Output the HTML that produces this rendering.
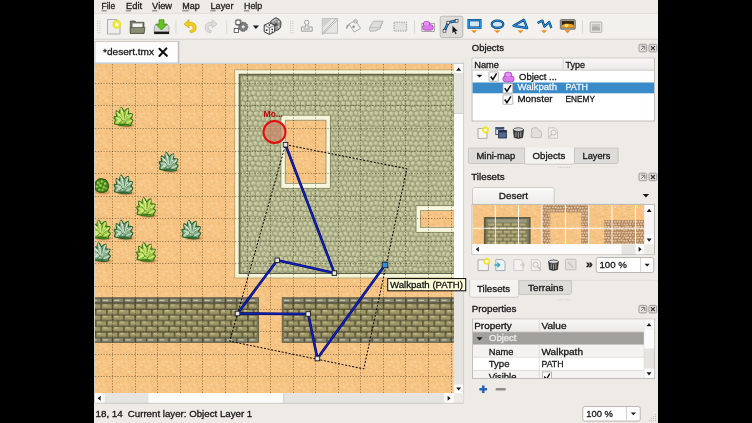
<!DOCTYPE html>
<html><head><meta charset="utf-8"><style>
body{margin:0;width:752px;height:423px;overflow:hidden;background:#000;position:relative;font-family:"Liberation Sans",sans-serif}
</style></head><body>
<div style="position:absolute;left:94px;top:0;width:564px;height:423px;background:#eeebe7"></div>
<svg width="752" height="423" viewBox="0 0 752 423" style="position:absolute;left:0;top:0;will-change:transform" font-family="Liberation Sans, sans-serif"><defs><linearGradient id="hdr" x1="0" y1="0" x2="0" y2="1"><stop offset="0" stop-color="#f8f7f5"/><stop offset="1" stop-color="#ebe9e6"/></linearGradient><linearGradient id="btn" x1="0" y1="0" x2="0" y2="1"><stop offset="0" stop-color="#fbfaf9"/><stop offset="1" stop-color="#ecebe8"/></linearGradient></defs><text x="101.5" y="9" font-size="9.2" fill="#202020" stroke="#202020" stroke-width="0.3" textLength="13.75" lengthAdjust="spacingAndGlyphs">File</text><rect x="101.5" y="10.4" width="5.2" height="0.9" fill="#606060"/><text x="125.9" y="9" font-size="9.2" fill="#202020" stroke="#202020" stroke-width="0.3" textLength="16.2" lengthAdjust="spacingAndGlyphs">Edit</text><rect x="125.9" y="10.4" width="5.2" height="0.9" fill="#606060"/><text x="152.1" y="9" font-size="9.2" fill="#202020" stroke="#202020" stroke-width="0.3" textLength="20" lengthAdjust="spacingAndGlyphs">View</text><rect x="152.1" y="10.4" width="5.2" height="0.9" fill="#606060"/><text x="182.25" y="9" font-size="9.2" fill="#202020" stroke="#202020" stroke-width="0.3" textLength="17.5" lengthAdjust="spacingAndGlyphs">Map</text><rect x="182.25" y="10.4" width="6.5" height="0.9" fill="#606060"/><text x="210.4" y="9" font-size="9.2" fill="#202020" stroke="#202020" stroke-width="0.3" textLength="23.1" lengthAdjust="spacingAndGlyphs">Layer</text><rect x="210.4" y="10.4" width="5.2" height="0.9" fill="#606060"/><text x="244" y="9" font-size="9.2" fill="#202020" stroke="#202020" stroke-width="0.3" textLength="18.25" lengthAdjust="spacingAndGlyphs">Help</text><rect x="244" y="10.4" width="5.2" height="0.9" fill="#606060"/><rect x="94" y="13" width="564" height="26" fill="#f3f1ee"/><line x1="94" y1="13.5" x2="658" y2="13.5" stroke="#e2e0dc" stroke-width="1"/><line x1="94" y1="39.2" x2="658" y2="39.2" stroke="#d4d2ce" stroke-width="1"/><rect x="95" y="41.6" width="84" height="21.4" fill="#fdfdfd" stroke="#c9c7c3" stroke-width="0.9"/><line x1="178.3" y1="42" x2="178.3" y2="63" stroke="#b9b7b3" stroke-width="1"/><text x="103" y="55.4" font-size="9.8" fill="#1a1a1a" stroke="#1a1a1a" stroke-width="0.3" textLength="51" lengthAdjust="spacingAndGlyphs">*desert.tmx</text><path d="M159.4 48.8 L166.8 55.8 M166.4 48.4 L159.4 56" stroke="#111" stroke-width="2.1" stroke-linecap="round"/><line x1="94" y1="63.3" x2="464" y2="63.3" stroke="#c4cad0" stroke-width="1"/><rect x="453.8" y="64" width="9.6" height="329.1" fill="#e6e4e0"/><rect x="453.8" y="64" width="9.6" height="9" fill="#fdfdfd"/><path d="M456.1 70.8L461.1 70.8L458.6 67.6Z" fill="#1a1a1a"/><rect x="453.8" y="113.4" width="9.6" height="176.6" fill="#fcfcfc"/><line x1="453.8" y1="113.4" x2="463.4" y2="113.4" stroke="#c8c6c2" stroke-width="0.8"/><rect x="453.8" y="384.5" width="9.6" height="8.6" fill="#fdfdfd"/><path d="M456.1 387.4L461.1 387.4L458.6 390.6Z" fill="#1a1a1a"/><line x1="463.6" y1="62.5" x2="463.6" y2="403.2" stroke="#c8c6c2" stroke-width="0.8"/><rect x="95" y="393.1" width="358.8" height="10" fill="#e6e4e0"/><rect x="95" y="393.1" width="9.6" height="10" fill="#fdfdfd"/><path d="M97.6 398.3L100.6 395.8L100.6 400.8Z" fill="#1a1a1a"/><rect x="148.4" y="393.1" width="135.35" height="10" fill="#fcfcfc"/><line x1="283.75" y1="393.1" x2="283.75" y2="403.1" stroke="#c8c6c2" stroke-width="0.8"/><rect x="444.2" y="393.1" width="9.6" height="10" fill="#fdfdfd"/><path d="M450.6 398.3L447.6 395.8L447.6 400.8Z" fill="#1a1a1a"/><rect x="453.8" y="393.1" width="9.6" height="10" fill="#eeebe7"/><line x1="95" y1="403.3" x2="463.6" y2="403.3" stroke="#c4c2be" stroke-width="0.8"/><line x1="94.5" y1="62.5" x2="94.5" y2="403.2" stroke="#c8c6c2" stroke-width="0.8"/><text x="95.5" y="416.9" font-size="9.8" fill="#161616" stroke="#161616" stroke-width="0.3" textLength="27.25" lengthAdjust="spacingAndGlyphs">18, 14</text><text x="127.75" y="416.9" font-size="9.8" fill="#161616" stroke="#161616" stroke-width="0.3" textLength="124.5" lengthAdjust="spacingAndGlyphs">Current layer: Object Layer 1</text><rect x="582.75" y="406.5" width="57.5" height="14.6" fill="#fefefe" stroke="#b2b0ac" stroke-width="0.9" rx="2"/><line x1="626.5" y1="407" x2="626.5" y2="420.6" stroke="#d0cecb" stroke-width="0.9"/><path d="M630.77 412.6L635.98 412.6L633.38 415.2Z" fill="#1a1a1a"/><text x="586.25" y="416.75" font-size="9.8" fill="#161616" stroke="#161616" stroke-width="0.3" textLength="26.75" lengthAdjust="spacingAndGlyphs">100 %</text><rect x="655" y="414" width="1" height="1" fill="#c0beb9"/><rect x="653" y="416" width="1" height="1" fill="#c0beb9"/><rect x="655" y="416" width="1" height="1" fill="#c0beb9"/><rect x="651" y="418" width="1" height="1" fill="#c0beb9"/><rect x="653" y="418" width="1" height="1" fill="#c0beb9"/><rect x="655" y="418" width="1" height="1" fill="#c0beb9"/><rect x="649" y="420" width="1" height="1" fill="#c0beb9"/><rect x="651" y="420" width="1" height="1" fill="#c0beb9"/><rect x="653" y="420" width="1" height="1" fill="#c0beb9"/><rect x="655" y="420" width="1" height="1" fill="#c0beb9"/><text x="471.75" y="51" font-size="9.6" fill="#161616" stroke="#161616" stroke-width="0.3" textLength="32.25" lengthAdjust="spacingAndGlyphs">Objects</text><rect x="639" y="44.3" width="7.75" height="7.5" fill="#e4e2de" stroke="#8a8884" stroke-width="0.8" rx="1.2"/><path d="M641.3 46.3 h3.5 v3.5 M641.3 49.8 l2.5 -2.5" stroke="#555" stroke-width="0.8" fill="none"/><rect x="649" y="44.3" width="7.75" height="7.5" fill="#e4e2de" stroke="#8a8884" stroke-width="0.8" rx="1.2"/><path d="M650.9 46.1 L654.9 50.1 M654.9 46.1 L650.9 50.1" stroke="#333" stroke-width="1.1"/><rect x="472.1" y="58.1" width="182.4" height="62.9" fill="#ffffff" stroke="#bcbab6" stroke-width="0.9"/><rect x="472.6" y="58.6" width="181.4" height="11.6" fill="url(#hdr)"/><line x1="472.6" y1="70.2" x2="654" y2="70.2" stroke="#c9c7c3" stroke-width="0.9"/><line x1="563.1" y1="59" x2="563.1" y2="70" stroke="#d4d2ce" stroke-width="0.9"/><text x="474.25" y="67.75" font-size="9.6" fill="#161616" stroke="#161616" stroke-width="0.3" textLength="24.75" lengthAdjust="spacingAndGlyphs">Name</text><text x="565.6" y="67.5" font-size="9.6" fill="#161616" stroke="#161616" stroke-width="0.3" textLength="19.4" lengthAdjust="spacingAndGlyphs">Type</text><path d="M476.5 74.8L482.5 74.8L479.5 77.6Z" fill="#1a1a1a"/><rect x="489" y="71.9" width="9.4" height="9.35" fill="#fdfdfd" stroke="#a8a6a2" stroke-width="0.8" rx="0.6"/><path d="M490.8 76.5 L492.9 79.65 L496.6 73.4" stroke="#0a0a0a" stroke-width="1.5" fill="none"/><rect x="504.6" y="72.2" width="7.2" height="5.6" rx="2.6" fill="#dc78ee" stroke="#9a3ab4" stroke-width="0.8"/><rect x="503" y="76.2" width="11" height="5.6" rx="2.4" fill="#dc78ee" stroke="#9a3ab4" stroke-width="0.8"/><rect x="505.4" y="73" width="5.6" height="3.8" rx="1.8" fill="#e896f4"/><text x="519" y="79.75" font-size="9.6" fill="#161616" stroke="#161616" stroke-width="0.3" textLength="38" lengthAdjust="spacingAndGlyphs">Object ...</text><rect x="472.6" y="82.5" width="181.4" height="10.8" fill="#3a8ac8"/><rect x="503" y="83.6" width="9.75" height="9.4" fill="#fdfdfd" stroke="#a8a6a2" stroke-width="0.8" rx="0.6"/><path d="M504.8 88.2 L506.9 91.4 L510.95 85.1" stroke="#0a0a0a" stroke-width="1.5" fill="none"/><text x="517.5" y="90.4" font-size="9.6" fill="#eef4fa" stroke="#eef4fa" stroke-width="0.3" textLength="39.5" lengthAdjust="spacingAndGlyphs">Walkpath</text><text x="565.6" y="90.4" font-size="9.6" fill="#eef4fa" stroke="#eef4fa" stroke-width="0.3" textLength="22.4" lengthAdjust="spacingAndGlyphs">PATH</text><rect x="503" y="94.9" width="9.75" height="9.4" fill="#fdfdfd" stroke="#a8a6a2" stroke-width="0.8" rx="0.6"/><path d="M504.8 99.5 L506.9 102.7 L510.95 96.4" stroke="#0a0a0a" stroke-width="1.5" fill="none"/><text x="517.5" y="102" font-size="9.6" fill="#161616" stroke="#161616" stroke-width="0.3" textLength="35" lengthAdjust="spacingAndGlyphs">Monster</text><text x="565.6" y="102" font-size="9.6" fill="#161616" stroke="#161616" stroke-width="0.3" textLength="29.4" lengthAdjust="spacingAndGlyphs">ENEMY</text><path d="M478 128.5 H484.5 L487 131 V138.4 H478 Z" fill="#f4f4f2" stroke="#9a9a98" stroke-width="0.8"/><circle cx="485.5" cy="130" r="3.4" fill="#f2e21a" opacity="0.9"/><circle cx="485.5" cy="130" r="1.6" fill="#fffbe0"/><rect x="495.8" y="127.4" width="8" height="7.2" fill="#e4e8f0" stroke="#2a3454" stroke-width="0.8"/><rect x="496.2" y="127.8" width="7.2" height="1.8" fill="#34466e"/><rect x="498.6" y="130.4" width="7.8" height="7.6" fill="#54688e" stroke="#1c2440" stroke-width="0.8"/><rect x="499" y="130.8" width="7" height="1.6" fill="#24304e"/><path d="M513.3 129.5 Q518.4 126.6 523.6 129.5 L522.6 137.6 Q518.4 139.2 514.3 137.6 Z" fill="#3a3a3a" stroke="#111" stroke-width="0.6"/><ellipse cx="518.45" cy="129.6" rx="5" ry="1.8" fill="#d8d8d8" stroke="#222" stroke-width="0.6"/><path d="M516 132 V137 M518.4 132.3 V137.6 M520.8 132 V137" stroke="#bdbdbd" stroke-width="0.8"/><path d="M531.5 129 Q534 126.8 537 128 Q539 129 538.6 130.6 L540.8 131.2 Q542.2 132.4 541.6 135 L541 137.4 Q536 138.4 531.2 137.2 Q530.4 134.6 532 133.4 Q531 131 531.5 129Z" fill="#e2e0dc" stroke="#b4b2ae" stroke-width="0.8"/><path d="M548.5 127.8 H555 L557.5 130.3 V138.2 H548.5 Z" fill="#efeeec" stroke="#c0bebb" stroke-width="0.8"/><circle cx="553.5" cy="132.5" r="2.6" fill="none" stroke="#b8b6b2" stroke-width="0.9"/><path d="M551.7 134.4 L549.4 137" stroke="#b8b6b2" stroke-width="1.1"/><path d="M468.4 148.1 H524.6 V163.5 H470.4 Q468.4 163.5 468.4 161.5 Z" fill="#dedcd8" stroke="#c2c0bc" stroke-width="0.8"/><path d="M574.4 148.1 H618.2 V161.5 Q618.2 163.5 616.2 163.5 H574.4 Z" fill="#dedcd8" stroke="#c2c0bc" stroke-width="0.8"/><path d="M524.6 147.6 V162.4 Q524.6 164.2 526.4 164.2 H572.6 Q574.4 164.2 574.4 162.4 V147.6" fill="#f5f3ef" stroke="#c2c0bc" stroke-width="0.8"/><text x="476.5" y="158.75" font-size="9.6" fill="#161616" stroke="#161616" stroke-width="0.3" textLength="38.75" lengthAdjust="spacingAndGlyphs">Mini-map</text><text x="532.5" y="159.4" font-size="9.6" fill="#161616" stroke="#161616" stroke-width="0.3" textLength="32.75" lengthAdjust="spacingAndGlyphs">Objects</text><text x="582.5" y="158.75" font-size="9.6" fill="#161616" stroke="#161616" stroke-width="0.3" textLength="27.75" lengthAdjust="spacingAndGlyphs">Layers</text><rect x="558" y="167" width="0.8" height="0.8" fill="#b8b6b2"/><rect x="560.2" y="167" width="0.8" height="0.8" fill="#b8b6b2"/><rect x="562.4" y="167" width="0.8" height="0.8" fill="#b8b6b2"/><rect x="564.6" y="167" width="0.8" height="0.8" fill="#b8b6b2"/><rect x="566.8" y="167" width="0.8" height="0.8" fill="#b8b6b2"/><rect x="569" y="167" width="0.8" height="0.8" fill="#b8b6b2"/><text x="471.25" y="179.75" font-size="9.6" fill="#161616" stroke="#161616" stroke-width="0.3" textLength="33.35" lengthAdjust="spacingAndGlyphs">Tilesets</text><rect x="639" y="173.2" width="7.75" height="7.5" fill="#e4e2de" stroke="#8a8884" stroke-width="0.8" rx="1.2"/><path d="M641.3 175.2 h3.5 v3.5 M641.3 178.7 l2.5 -2.5" stroke="#555" stroke-width="0.8" fill="none"/><rect x="649" y="173.2" width="7.75" height="7.5" fill="#e4e2de" stroke="#8a8884" stroke-width="0.8" rx="1.2"/><path d="M650.9 175 L654.9 179 M654.9 175 L650.9 179" stroke="#333" stroke-width="1.1"/><path d="M472.5 204.5 V189.5 Q472.5 187.5 474.5 187.5 H552.25 Q554.25 187.5 554.25 189.5 V204.5" fill="url(#btn)" stroke="#c4c2be" stroke-width="0.8"/><text x="498.75" y="198.75" font-size="9.6" fill="#161616" stroke="#161616" stroke-width="0.3" textLength="29.25" lengthAdjust="spacingAndGlyphs">Desert</text><path d="M642.6 193.9L649.2 193.9L645.9 197.4Z" fill="#1a1a1a"/><line x1="554.25" y1="204.2" x2="644" y2="204.2" stroke="#d0ceca" stroke-width="0.8"/><clipPath id="tc"><rect x="472.5" y="205" width="171.8" height="39.2"/></clipPath><rect x="472" y="204.5" width="182.5" height="50.1" fill="#ffffff" stroke="#b8b6b2" stroke-width="0.9"/><g clip-path="url(#tc)"><rect x="472.5" y="205" width="171.8" height="39.2" fill="url(#sand)"/><rect x="483.9" y="217" width="46.7" height="33" fill="#5e5c44"/><rect x="485.6" y="218.6" width="43.3" height="31.4" fill="#7c7a60"/><rect x="487.4" y="222.6" width="39.7" height="27.4" fill="url(#brick2)"/><rect x="487.4" y="219.4" width="39.7" height="3" fill="#9a9880"/><rect x="542" y="205" width="8.3" height="39.2" fill="url(#cobble)"/><rect x="542" y="205" width="46.2" height="7.6" fill="url(#cobble)"/><rect x="581.2" y="205" width="7" height="39.2" fill="url(#cobble)"/><rect x="604" y="220" width="40.3" height="24.2" fill="url(#cobble)"/><line x1="495.3" y1="205" x2="495.3" y2="244.2" stroke="#ffffff" stroke-width="0.9"/><line x1="518.5" y1="205" x2="518.5" y2="244.2" stroke="#ffffff" stroke-width="0.9"/><line x1="542" y1="205" x2="542" y2="244.2" stroke="#ffffff" stroke-width="0.9"/><line x1="565.5" y1="205" x2="565.5" y2="244.2" stroke="#ffffff" stroke-width="0.9"/><line x1="588.7" y1="205" x2="588.7" y2="244.2" stroke="#ffffff" stroke-width="0.9"/><line x1="612" y1="205" x2="612" y2="244.2" stroke="#ffffff" stroke-width="0.9"/><line x1="635.5" y1="205" x2="635.5" y2="244.2" stroke="#ffffff" stroke-width="0.9"/><line x1="472.5" y1="228.3" x2="644.3" y2="228.3" stroke="#ffffff" stroke-width="0.9"/></g><rect x="644.3" y="205" width="9.7" height="39.2" fill="#f6f5f3"/><rect x="644.3" y="205" width="9.7" height="10.4" fill="#fdfdfd"/><path d="M646.65 211.9L651.65 211.9L649.15 208.7Z" fill="#1a1a1a"/><rect x="644.3" y="235.4" width="9.7" height="8.8" fill="#fdfdfd"/><path d="M646.65 238.6L651.65 238.6L649.15 241.8Z" fill="#1a1a1a"/><line x1="644.3" y1="205" x2="644.3" y2="244.2" stroke="#dcdad6" stroke-width="0.6"/><rect x="472.5" y="244.2" width="171.8" height="10" fill="#e6e4e0"/><rect x="472.5" y="244.2" width="10.5" height="10" fill="#fdfdfd"/><path d="M475.8 249.2L478.8 246.7L478.8 251.7Z" fill="#1a1a1a"/><rect x="483" y="244.2" width="138.6" height="10" fill="#fcfcfc"/><rect x="635.5" y="244.2" width="8.8" height="10" fill="#fdfdfd"/><path d="M641.6 249.2L638.6 246.7L638.6 251.7Z" fill="#1a1a1a"/><rect x="644.3" y="244.2" width="9.7" height="10" fill="#eeebe7"/><path d="M478 259.8 H485.9 L488.4 262.3 V270.6 H478 Z" fill="#f4f4f2" stroke="#9a9a98" stroke-width="0.8"/><circle cx="486.9" cy="261.3" r="3.4" fill="#f2e21a" opacity="0.9"/><circle cx="486.9" cy="261.3" r="1.6" fill="#fffbe0"/><path d="M495.8 259.6 H502.5 L505 262.1 V270.6 H495.8 Z" fill="#eef3f4" stroke="#8aa0a8" stroke-width="0.8"/><path d="M494.5 265 H499.5 M497.3 262.8 L499.6 265 L497.3 267.2" stroke="#3aa8b8" stroke-width="1.4" fill="none"/><path d="M513.8 259.6 H520.5 L523 262.1 V270.6 H513.8 Z" fill="#f2f1ef" stroke="#c6c4c0" stroke-width="0.8"/><path d="M520 265 H524 M522.4 263.2 L524.2 265 L522.4 266.8" stroke="#c8c6c2" stroke-width="1.2" fill="none"/><path d="M531.3 259.6 H538 L540.5 262.1 V270.6 H531.3 Z" fill="#f2f1ef" stroke="#c6c4c0" stroke-width="0.8"/><circle cx="535.6" cy="264.6" r="2.6" fill="none" stroke="#bab8b4" stroke-width="0.9"/><path d="M537.6 266.6 L541 270" stroke="#bab8b4" stroke-width="1.2"/><path d="M548.6 261.6 Q553.5 258.8 558.4 261.6 L557.5 269.6 Q553.5 271.2 549.5 269.6 Z" fill="#3a3a3a" stroke="#111" stroke-width="0.6"/><ellipse cx="553.5" cy="261.7" rx="4.8" ry="1.8" fill="#d8d8d8" stroke="#222" stroke-width="0.6"/><path d="M551.2 264 V269 M553.5 264.3 V269.6 M555.8 264 V269" stroke="#bdbdbd" stroke-width="0.8"/><rect x="565.4" y="259.2" width="10.6" height="10.6" fill="#e2e0dc" stroke="#b8b6b2" stroke-width="0.8" rx="1"/><path d="M567.5 262 L573.5 267.5" stroke="#c8c6c2" stroke-width="1.5"/><text x="586" y="267.6" font-size="10" fill="#161616" stroke="#161616" stroke-width="0.3" font-weight="bold" textLength="6.8" lengthAdjust="spacingAndGlyphs">»</text><rect x="596.25" y="257.5" width="57.5" height="15" fill="#fefefe" stroke="#b2b0ac" stroke-width="0.9" rx="2"/><line x1="640.6" y1="258" x2="640.6" y2="272" stroke="#d0cecb" stroke-width="0.9"/><path d="M644.57 263.8L649.77 263.8L647.17 266.4Z" fill="#1a1a1a"/><text x="599.4" y="267.5" font-size="9.8" fill="#161616" stroke="#161616" stroke-width="0.3" textLength="27.5" lengthAdjust="spacingAndGlyphs">100 %</text><line x1="468" y1="280.3" x2="658" y2="280.3" stroke="#d6d4d0" stroke-width="0.6"/><path d="M518.75 280.6 H571.5 V292.4 Q571.5 294.4 569.5 294.4 H518.75 Z" fill="#dedcd8" stroke="#c2c0bc" stroke-width="0.8"/><path d="M469.6 280 V295.2 Q469.6 297.25 471.6 297.25 H516.7 Q518.75 297.25 518.75 295.2 V280" fill="#f5f3ef" stroke="#c2c0bc" stroke-width="0.8"/><text x="476.9" y="291.5" font-size="9.6" fill="#161616" stroke="#161616" stroke-width="0.3" textLength="33.35" lengthAdjust="spacingAndGlyphs">Tilesets</text><text x="528" y="291" font-size="9.6" fill="#161616" stroke="#161616" stroke-width="0.3" textLength="35.5" lengthAdjust="spacingAndGlyphs">Terrains</text><rect x="558" y="299.4" width="0.8" height="0.8" fill="#b8b6b2"/><rect x="560.2" y="299.4" width="0.8" height="0.8" fill="#b8b6b2"/><rect x="562.4" y="299.4" width="0.8" height="0.8" fill="#b8b6b2"/><rect x="564.6" y="299.4" width="0.8" height="0.8" fill="#b8b6b2"/><rect x="566.8" y="299.4" width="0.8" height="0.8" fill="#b8b6b2"/><rect x="569" y="299.4" width="0.8" height="0.8" fill="#b8b6b2"/><text x="471.75" y="312.25" font-size="9.6" fill="#161616" stroke="#161616" stroke-width="0.3" textLength="44.75" lengthAdjust="spacingAndGlyphs">Properties</text><rect x="639" y="305.4" width="7.75" height="7.5" fill="#e4e2de" stroke="#8a8884" stroke-width="0.8" rx="1.2"/><path d="M641.3 307.4 h3.5 v3.5 M641.3 310.9 l2.5 -2.5" stroke="#555" stroke-width="0.8" fill="none"/><rect x="649" y="305.4" width="7.75" height="7.5" fill="#e4e2de" stroke="#8a8884" stroke-width="0.8" rx="1.2"/><path d="M650.9 307.2 L654.9 311.2 M654.9 307.2 L650.9 311.2" stroke="#333" stroke-width="1.1"/><rect x="472.5" y="319.1" width="182.1" height="59.4" fill="#ffffff" stroke="#bcbab6" stroke-width="0.9"/><rect x="473" y="319.6" width="171" height="12.4" fill="url(#hdr)"/><line x1="473" y1="332" x2="644" y2="332" stroke="#c9c7c3" stroke-width="0.9"/><line x1="539.25" y1="320" x2="539.25" y2="332" stroke="#d4d2ce" stroke-width="0.9"/><text x="474.25" y="328.75" font-size="9.6" fill="#161616" stroke="#161616" stroke-width="0.3" textLength="37.5" lengthAdjust="spacingAndGlyphs">Property</text><text x="541.5" y="328.75" font-size="9.6" fill="#161616" stroke="#161616" stroke-width="0.3" textLength="25" lengthAdjust="spacingAndGlyphs">Value</text><rect x="473" y="332.2" width="171" height="12.55" fill="#a2a09c"/><path d="M476.5 337.3L482.7 337.3L479.6 340.4Z" fill="#1a1a1a"/><text x="489" y="341.25" font-size="9.6" fill="#ececea" stroke="#ececea" stroke-width="0.3" textLength="27.5" lengthAdjust="spacingAndGlyphs">Object</text><rect x="473" y="344.75" width="171" height="12.5" fill="#f4f3f1"/><rect x="473" y="357.25" width="171" height="13.15" fill="#ffffff"/><rect x="473" y="370.4" width="171" height="7.6" fill="#f4f3f1"/><line x1="473" y1="357.25" x2="644" y2="357.25" stroke="#d8d6d2" stroke-width="0.8"/><line x1="473" y1="370.4" x2="644" y2="370.4" stroke="#d8d6d2" stroke-width="0.8"/><line x1="539.25" y1="344.75" x2="539.25" y2="378" stroke="#d8d6d2" stroke-width="0.8"/><clipPath id="pc"><rect x="473" y="344.75" width="171" height="33.3"/></clipPath><g clip-path="url(#pc)"><text x="488.75" y="354.5" font-size="9.6" fill="#161616" stroke="#161616" stroke-width="0.3" textLength="24.75" lengthAdjust="spacingAndGlyphs">Name</text><text x="541.5" y="354.5" font-size="9.6" fill="#161616" stroke="#161616" stroke-width="0.3" textLength="41.5" lengthAdjust="spacingAndGlyphs">Walkpath</text><text x="488.75" y="367" font-size="9.6" fill="#161616" stroke="#161616" stroke-width="0.3" textLength="20.75" lengthAdjust="spacingAndGlyphs">Type</text><text x="541.5" y="367" font-size="9.6" fill="#161616" stroke="#161616" stroke-width="0.3" textLength="22" lengthAdjust="spacingAndGlyphs">PATH</text><text x="488.75" y="379.6" font-size="9.6" fill="#161616" stroke="#161616" stroke-width="0.3" textLength="27.75" lengthAdjust="spacingAndGlyphs">Visible</text><rect x="542.5" y="371.9" width="9" height="9.1" fill="#fdfdfd" stroke="#a8a6a2" stroke-width="0.8"/><path d="M544.3 376.5 L546.4 379.6 L549.8 373.5" stroke="#0a0a0a" stroke-width="1.4" fill="none"/></g><rect x="644" y="319.6" width="10.1" height="58.4" fill="#e6e4e0"/><rect x="644" y="319.6" width="10.1" height="28.9" fill="#fcfcfc"/><line x1="644" y1="329.1" x2="654.1" y2="329.1" stroke="#e2e0dc" stroke-width="0.6"/><path d="M646.5 326.2L651.5 326.2L649 323Z" fill="#1a1a1a"/><rect x="644" y="368.75" width="10.1" height="9.25" fill="#fdfdfd"/><path d="M646.5 372.2L651.5 372.2L649 375.4Z" fill="#1a1a1a"/><line x1="644" y1="319.6" x2="644" y2="378" stroke="#dcdad6" stroke-width="0.6"/><path d="M483.25 385.4 V393 M479.4 389.2 H487.1" stroke="#2a62b4" stroke-width="2.6"/><path d="M496.8 389.25 H504.7" stroke="#8e8e8c" stroke-width="2.4" stroke-linecap="round"/><rect x="97.2" y="20.8" width="1" height="1" fill="#c4c2be"/><rect x="99.4" y="20.8" width="1" height="1" fill="#c4c2be"/><rect x="97.2" y="23.1" width="1" height="1" fill="#c4c2be"/><rect x="99.4" y="23.1" width="1" height="1" fill="#c4c2be"/><rect x="97.2" y="25.4" width="1" height="1" fill="#c4c2be"/><rect x="99.4" y="25.4" width="1" height="1" fill="#c4c2be"/><rect x="97.2" y="27.7" width="1" height="1" fill="#c4c2be"/><rect x="99.4" y="27.7" width="1" height="1" fill="#c4c2be"/><rect x="97.2" y="30" width="1" height="1" fill="#c4c2be"/><rect x="99.4" y="30" width="1" height="1" fill="#c4c2be"/><rect x="97.2" y="32.3" width="1" height="1" fill="#c4c2be"/><rect x="99.4" y="32.3" width="1" height="1" fill="#c4c2be"/><rect x="290.2" y="20.8" width="1" height="1" fill="#c4c2be"/><rect x="292.4" y="20.8" width="1" height="1" fill="#c4c2be"/><rect x="290.2" y="23.1" width="1" height="1" fill="#c4c2be"/><rect x="292.4" y="23.1" width="1" height="1" fill="#c4c2be"/><rect x="290.2" y="25.4" width="1" height="1" fill="#c4c2be"/><rect x="292.4" y="25.4" width="1" height="1" fill="#c4c2be"/><rect x="290.2" y="27.7" width="1" height="1" fill="#c4c2be"/><rect x="292.4" y="27.7" width="1" height="1" fill="#c4c2be"/><rect x="290.2" y="30" width="1" height="1" fill="#c4c2be"/><rect x="292.4" y="30" width="1" height="1" fill="#c4c2be"/><rect x="290.2" y="32.3" width="1" height="1" fill="#c4c2be"/><rect x="292.4" y="32.3" width="1" height="1" fill="#c4c2be"/><line x1="175.9" y1="20.5" x2="175.9" y2="33.5" stroke="#d6d4d0" stroke-width="0.9"/><line x1="226.75" y1="20.5" x2="226.75" y2="33.5" stroke="#d6d4d0" stroke-width="0.9"/><line x1="414.5" y1="20.5" x2="414.5" y2="33.5" stroke="#d6d4d0" stroke-width="0.9"/><line x1="582.5" y1="20.5" x2="582.5" y2="33.5" stroke="#d6d4d0" stroke-width="0.9"/><path d="M107.5 19.5 H117 L120 22.5 V34 H107.5 Z" fill="#ecedee" stroke="#a4a6a6" stroke-width="0.9"/><circle cx="116.8" cy="24.5" r="4.4" fill="#f0e41c"/><path d="M116.8 21.6 L117.6 23.6 L119.6 23.7 L118 25 L118.6 27 L116.8 25.9 L115 27 L115.6 25 L114 23.7 L116 23.6 Z" fill="#fffef0"/><path d="M130.3 21 H135 L136.3 22.3 H144 V33.4 H130.3 Z" fill="#6c705c" stroke="#4a4d3e" stroke-width="0.7"/><rect x="132.3" y="23.2" width="10.3" height="6.8" fill="#f4f4f2" stroke="#9a9c94" stroke-width="0.5"/><path d="M130.3 27.5 H145 L144 33.4 H130.3 Z" fill="#8a8e76" stroke="#4a4d3e" stroke-width="0.7"/><path d="M154.2 27 L156 24 H167.2 L169 27 V33.8 H154.2 Z" fill="#d8d8d6" stroke="#8c8c8a" stroke-width="0.7"/><rect x="154.2" y="31.6" width="14.8" height="2.4" fill="#1a1a1a"/><path d="M159 19.8 H164 V24.4 H167 L161.5 30 L156 24.4 H159 Z" fill="#64c424" stroke="#3a8a10" stroke-width="0.7"/><path d="M184 24.2 L189 19.6 L189 22.2 Q196.5 22 196.2 28 Q195.6 32.8 190.2 32.6 L189.8 30.6 Q193.2 30.2 193 27.4 Q192.8 25 189 25.2 L189 28 Z" fill="#f0cc20" stroke="#c8a000" stroke-width="0.6"/><path d="M217.2 24.2 L212.2 19.6 L212.2 22.2 Q204.8 22 205.1 28 Q205.7 32.8 211 32.6 L211.4 30.6 Q208 30.2 208.2 27.4 Q208.4 25 212.2 25.2 L212.2 28 Z" fill="#dcdcdc" stroke="#b8b8b8" stroke-width="0.6"/><circle cx="243.2" cy="26.8" r="4.6" fill="#7a7c7c" stroke="#444" stroke-width="0.7" stroke-dasharray="1.6 0.9"/><circle cx="243.2" cy="26.8" r="1.6" fill="#e0e0e0"/><rect x="236" y="20.2" width="4.2" height="4.2" fill="#ffffff" stroke="#444" stroke-width="0.8"/><rect x="234.2" y="28.5" width="4.2" height="4" fill="#ffffff" stroke="#444" stroke-width="0.8"/><circle cx="238.5" cy="22.6" r="3.4" fill="none" stroke="#666" stroke-width="0.6"/><path d="M252.8 25.6L259 25.6L255.9 28.9Z" fill="#1a1a1a"/><path d="M270.6 21.4 Q275 17.4 276.4 17.8 Q280.4 19.6 281 22 L280.6 27.6 Q278 30.6 275.6 30.8 L271 27.6 Z" fill="#9a9a9a" stroke="#2a2a2a" stroke-width="0.8"/><path d="M272 21.6 Q275.4 19.6 276.6 19.4" fill="none" stroke="#e8e8e8" stroke-width="0.8"/><circle cx="276" cy="24.4" r="1.5" fill="#4a4a4a"/><circle cx="278.8" cy="21.8" r="0.8" fill="#f0f0f0"/><circle cx="278.6" cy="27" r="0.8" fill="#f0f0f0"/><path d="M264.2 25.2 L269.4 22.8 L274.8 25.2 L274.6 31.8 L269.4 34.4 L264.2 31.8 Z" fill="#f8f8f8" stroke="#222" stroke-width="0.9" stroke-linejoin="round"/><path d="M264.2 25.2 L269.4 27.8 L274.8 25.2 M269.4 27.8 V34.4" fill="none" stroke="#333" stroke-width="0.7"/><circle cx="269.4" cy="25.1" r="0.9" fill="#222"/><circle cx="266.6" cy="30.2" r="0.9" fill="#222"/><circle cx="272.2" cy="29.4" r="0.8" fill="#222"/><circle cx="272.2" cy="32" r="0.8" fill="#222"/><circle cx="306.7" cy="22.4" r="2.2" fill="#f4f4f2" stroke="#8a8a88" stroke-width="0.8"/><path d="M305.6 24.4 V27 H301.4 V31.2 H312.2 V27 H308 V24.4" fill="#eeeeec" stroke="#8a8a88" stroke-width="0.8"/><line x1="303.5" y1="29" x2="310" y2="29" stroke="#8a8a88" stroke-width="0.8"/><rect x="322.2" y="18.4" width="15.2" height="14.8" fill="#e6e6e4" stroke="#b4b4b2" stroke-width="0.8"/><path d="M322.6 18.8 L332 18.8 L322.6 28 Z" fill="#d0d0ce"/><path d="M337.4 19.8 L324.2 33 L322.6 34.4 L323.2 32.4 L336.2 18.6 Z" fill="#f4f4f2" stroke="#a4a4a2" stroke-width="0.8"/><path d="M349 24 L355.5 20.6 L360.6 28.4 L354.2 32 Z" fill="#f2f2f0" stroke="#9a9a98" stroke-width="0.8"/><circle cx="355.6" cy="21.4" r="1.8" fill="none" stroke="#9a9a98" stroke-width="0.8"/><path d="M349 24 Q346 24.8 345.8 28.6 L347.4 28.8 Q347.8 26 349.6 25.6" fill="#a8a8a6"/><circle cx="353.6" cy="26.8" r="1.2" fill="#8a8a88"/><path d="M369.4 27.6 L373.6 21.2 H383 L380 28.8 Q376 31.8 370 31.2 Z" fill="#dcdcda" stroke="#a8a8a6" stroke-width="0.8"/><path d="M369.4 27.6 H379.6 L383 21.2" fill="none" stroke="#b8b8b6" stroke-width="0.7"/><rect x="394" y="22.2" width="12.6" height="8.8" fill="#e2e2e0" stroke="#8a8a88" stroke-width="0.8" stroke-dasharray="1.4 1"/><rect x="421.8" y="23.6" width="12.8" height="7.8" fill="#eceee8" stroke="#8a8c84" stroke-width="0.7"/><rect x="423.4" y="21.4" width="6.4" height="5.2" rx="2.4" fill="#dc78ee" stroke="#9a3ab4" stroke-width="0.7"/><rect x="422.6" y="24.8" width="10.6" height="5.4" rx="2.4" fill="#dc78ee" stroke="#9a3ab4" stroke-width="0.7"/><rect x="424" y="22" width="5" height="3.6" rx="1.6" fill="#e896f4"/><rect x="440.2" y="16.2" width="22.6" height="21.4" fill="#dfddd9" stroke="#b6b4b0" stroke-width="0.9" rx="2"/><path d="M444.5 30.8 L448.3 22.6 L456.6 20.8" fill="none" stroke="#0c2440" stroke-width="2.6" stroke-linejoin="round"/><path d="M444.5 30.8 L448.3 22.6 L456.6 20.8" fill="none" stroke="#1a9af0" stroke-width="1.4" stroke-linejoin="round"/><rect x="443.1" y="29.4" width="2.8" height="2.8" fill="#f4f4f4" stroke="#222" stroke-width="0.6"/><rect x="446.9" y="21.2" width="2.8" height="2.8" fill="#f4f4f4" stroke="#222" stroke-width="0.6"/><rect x="455.2" y="19.4" width="2.8" height="2.8" fill="#f4f4f4" stroke="#222" stroke-width="0.6"/><path d="M452.2 25.6 L452.2 33.4 L454.1 31.8 L455.5 34.6 L456.9 34 L455.6 31.2 L458.1 31 Z" fill="#111" stroke="#f0f0f0" stroke-width="0.4"/><path d="M471.1 30.2 H477.1 L474.1 33.2 Z" fill="#f08a20"/><path d="M494.2 30.2 H500.2 L497.2 33.2 Z" fill="#f08a20"/><path d="M517.5 30.2 H523.5 L520.5 33.2 Z" fill="#f08a20"/><path d="M541 30.2 H547 L544 33.2 Z" fill="#f08a20"/><path d="M564.5 30.2 H570.5 L567.5 33.2 Z" fill="#f08a20"/><rect x="468.6" y="20.2" width="11.8" height="7.4" fill="#d4e6f6" stroke="#0c2a48" stroke-width="2.2"/><rect x="468.6" y="20.2" width="11.8" height="7.4" fill="none" stroke="#1a94ec" stroke-width="1.2"/><ellipse cx="497.5" cy="24.2" rx="5.8" ry="3.6" fill="#d4e6f6" stroke="#0c2a48" stroke-width="2.2"/><ellipse cx="497.5" cy="24.2" rx="5.8" ry="3.6" fill="none" stroke="#1a94ec" stroke-width="1.2"/><path d="M513.5 25.8 L524 19.8 L527.2 28.2 Z" fill="#d4e6f6" stroke="#0c2a48" stroke-width="2.2" stroke-linejoin="round"/><path d="M513.5 25.8 L524 19.8 L527.2 28.2 Z" fill="none" stroke="#1a94ec" stroke-width="1.2" stroke-linejoin="round"/><path d="M537.6 23 L542.4 20.6 L544.4 26.6 L549.2 22 L551.4 28" fill="none" stroke="#0c2a48" stroke-width="2.2" stroke-linejoin="round"/><path d="M537.6 23 L542.4 20.6 L544.4 26.6 L549.2 22 L551.4 28" fill="none" stroke="#1a94ec" stroke-width="1.2" stroke-linejoin="round"/><rect x="560.3" y="19.5" width="15" height="9.8" fill="#9a9a98" stroke="#6a6a68" stroke-width="0.8" rx="1"/><rect x="561.8" y="21" width="12" height="6.8" fill="#3a2a10"/><path d="M561.8 25 Q567.8 22.6 573.8 25 V27.8 H561.8 Z" fill="#f0a020"/><circle cx="566.5" cy="25.6" r="1.8" fill="#ffe070"/><rect x="590.2" y="22" width="11.6" height="10.4" fill="#e4e2de" stroke="#a8a6a2" stroke-width="0.8" rx="1"/><rect x="592" y="24" width="8" height="6.6" fill="#c8c6c2"/><path d="M592 27 Q596 25.6 600 27.4 V30.6 H592Z" fill="#b0aeaa"/></svg><svg width="752" height="423" viewBox="0 0 752 423" style="position:absolute;left:0;top:0"><defs><clipPath id="mc"><rect x="95" y="64" width="358.8" height="329.1"/></clipPath><pattern id="sand" x="89.93" y="60.83" width="22.57" height="22.57" patternUnits="userSpaceOnUse"><rect width="23.57" height="23.57" fill="#f6c483"/><rect x="5.37" y="12.28" width="1.3" height="1.1" fill="#ecb06c" opacity="0.85"/><rect x="8.35" y="13.63" width="1.3" height="1.1" fill="#ecb06c" opacity="0.85"/><rect x="14.12" y="1.48" width="1.3" height="1.1" fill="#ecb06c" opacity="0.85"/><rect x="0.3" y="18.9" width="1.3" height="1.1" fill="#ecb06c" opacity="0.85"/><rect x="5.85" y="5.29" width="1.3" height="1.1" fill="#ecb06c" opacity="0.85"/><rect x="22.47" y="10.61" width="1.3" height="1.1" fill="#ecb06c" opacity="0.85"/><rect x="18.88" y="10.75" width="1.3" height="1.1" fill="#ecb06c" opacity="0.85"/><rect x="14.42" y="3.4" width="1.3" height="1.1" fill="#ecb06c" opacity="0.85"/><rect x="14.33" y="19.59" width="1.3" height="1.1" fill="#ecb06c" opacity="0.85"/><rect x="11.81" y="16.73" width="1.3" height="1.1" fill="#ecb06c" opacity="0.85"/><rect x="15.15" y="1.45" width="1.3" height="1.1" fill="#ecb06c" opacity="0.85"/><rect x="17.11" y="13.34" width="1.3" height="1.1" fill="#ecb06c" opacity="0.85"/><rect x="6.8" y="0.7" width="1.3" height="1.1" fill="#ecb06c" opacity="0.85"/><rect x="19.53" y="10.67" width="1.3" height="1.1" fill="#ecb06c" opacity="0.85"/><rect x="16.22" y="19.83" width="1.3" height="1.1" fill="#ecb06c" opacity="0.85"/><rect x="16.12" y="20.79" width="1.3" height="1.1" fill="#ecb06c" opacity="0.85"/><rect x="8.91" y="18.08" width="1.3" height="1.1" fill="#ecb06c" opacity="0.85"/><rect x="10.04" y="21.12" width="1.3" height="1.1" fill="#ecb06c" opacity="0.85"/><rect x="19.84" y="2.2" width="1.3" height="1.1" fill="#ecb06c" opacity="0.85"/><rect x="3.07" y="4.9" width="1.3" height="1.1" fill="#ecb06c" opacity="0.85"/><rect x="21.79" y="9.84" width="1.3" height="1.1" fill="#ecb06c" opacity="0.85"/><rect x="14.14" y="6.79" width="1.3" height="1.1" fill="#ecb06c" opacity="0.85"/><rect x="11.45" y="8.71" width="1.3" height="1.1" fill="#ecb06c" opacity="0.85"/><rect x="7.92" y="13.21" width="1.3" height="1.1" fill="#ecb06c" opacity="0.85"/><rect x="13.19" y="20.41" width="1.3" height="1.1" fill="#ecb06c" opacity="0.85"/><rect x="15.39" y="20.97" width="1.3" height="1.1" fill="#ecb06c" opacity="0.85"/><rect x="19.33" y="22.37" width="1.3" height="1.1" fill="#ecb06c" opacity="0.85"/><rect x="15.15" y="3.68" width="1.3" height="1.1" fill="#ecb06c" opacity="0.85"/><rect x="19.42" y="21.77" width="1.3" height="1.1" fill="#ecb06c" opacity="0.85"/><rect x="20.42" y="12.84" width="1.3" height="1.1" fill="#ecb06c" opacity="0.85"/><rect x="16.11" y="4.77" width="1.3" height="1.1" fill="#ecb06c" opacity="0.85"/><rect x="18.77" y="12.94" width="1.3" height="1.1" fill="#ecb06c" opacity="0.85"/><rect x="6.43" y="1.43" width="1.3" height="1.1" fill="#ecb06c" opacity="0.85"/><rect x="19.27" y="22.34" width="1.3" height="1.1" fill="#ecb06c" opacity="0.85"/><rect x="2" y="18.07" width="1.3" height="1.1" fill="#ecb06c" opacity="0.85"/><rect x="9.26" y="3.4" width="1.3" height="1.1" fill="#ecb06c" opacity="0.85"/><rect x="6.63" y="17.35" width="1.3" height="1.1" fill="#ecb06c" opacity="0.85"/><rect x="19.7" y="1" width="1.3" height="1.1" fill="#ecb06c" opacity="0.85"/><rect x="13.87" y="1.01" width="1.3" height="1.1" fill="#ecb06c" opacity="0.85"/><rect x="16.22" y="7.47" width="1.3" height="1.1" fill="#ecb06c" opacity="0.85"/><rect x="19.88" y="22.13" width="1" height="1" fill="#fcdcac"/><rect x="11.41" y="22.54" width="1" height="1" fill="#fcdcac"/><rect x="6.99" y="1.74" width="1" height="1" fill="#fcdcac"/><rect x="13.54" y="0.71" width="1" height="1" fill="#fcdcac"/><rect x="4.45" y="9.21" width="1" height="1" fill="#fcdcac"/><rect x="13.78" y="3.53" width="1" height="1" fill="#fcdcac"/><rect x="0.96" y="19.59" width="1" height="1" fill="#fcdcac"/><rect x="7.08" y="21.64" width="1" height="1" fill="#fcdcac"/><rect x="20.24" y="8.53" width="1" height="1" fill="#fcdcac"/><rect x="10.39" y="11.74" width="1" height="1" fill="#fcdcac"/><rect x="14.53" y="13.44" width="1" height="1" fill="#fcdcac"/><rect x="12.62" y="14" width="1" height="1" fill="#fcdcac"/><rect x="21.23" y="11.44" width="1" height="1" fill="#fcdcac"/><rect x="9.73" y="16.26" width="1" height="1" fill="#fcdcac"/><rect x="5.36" y="6.8" width="1" height="1" fill="#fcdcac"/><rect x="22.07" y="11.76" width="1" height="1" fill="#fcdcac"/><rect x="12.38" y="0.26" width="1" height="1" fill="#fcdcac"/><rect x="9.37" y="13.09" width="1" height="1" fill="#fcdcac"/><rect x="0.45" y="13.9" width="1" height="1" fill="#fcdcac"/><rect x="14.27" y="1.36" width="1" height="1" fill="#fcdcac"/><rect x="14.16" y="10.52" width="1" height="1" fill="#fcdcac"/><rect x="15.33" y="7.96" width="1" height="1" fill="#fcdcac"/><rect x="15.96" y="16.66" width="1" height="1" fill="#fff4e0"/><rect x="0.5" y="1.37" width="1" height="1" fill="#fff4e0"/><rect x="15.26" y="21.74" width="1" height="1" fill="#fff4e0"/><rect x="5.67" y="10.3" width="1" height="1" fill="#fff4e0"/><rect x="13.38" y="7.22" width="1" height="1" fill="#fff4e0"/><rect x="8.21" y="7.06" width="1" height="1" fill="#fff4e0"/></pattern><pattern id="stone" x="89.93" y="60.83" width="45.14" height="45.14" patternUnits="userSpaceOnUse"><rect width="46.14" height="46.14" fill="#8e9069"/><polygon points="4.75,3.73 2.24,5.6 -0.54,3.9 0.24,0.15 3.92,0.23 4.78,1.1" fill="#bbbd95"/><polygon points="4.75,48.87 2.24,50.74 -0.54,49.04 0.24,45.29 3.92,45.37 4.78,46.24" fill="#bbbd95"/><polygon points="49.89,3.73 47.38,5.6 44.6,3.9 45.38,0.15 49.06,0.23 49.92,1.1" fill="#bbbd95"/><polygon points="49.89,48.87 47.38,50.74 44.6,49.04 45.38,45.29 49.06,45.37 49.92,46.24" fill="#bbbd95"/><polygon points="4.03,9.97 2.59,9.1 2.62,6.41 5.12,4.55 7.59,6.3 7.47,9.02" fill="#bbbd95"/><polygon points="2.14,9.91 3.58,10.77 4.22,14.31 2.98,15.32 -0.18,13.96 -0.26,11.13" fill="#bbbd95"/><polygon points="47.28,9.91 48.72,10.77 49.36,14.31 48.12,15.32 44.96,13.96 44.88,11.13" fill="#bbbd95"/><polygon points="5.49,20.29 3.16,18.69 3.49,16.1 4.73,15.09 7.14,15.52 7.7,18.99" fill="#bbbd95"/><polygon points="4.96,23.8 2.23,24.58 0.51,23.71 0.4,20.43 2.73,19.44 5.07,21.05" fill="#bbbd95"/><polygon points="50.1,23.8 47.37,24.58 45.65,23.71 45.54,20.43 47.87,19.44 50.21,21.05" fill="#bbbd95"/><polygon points="5.47,29.8 2.33,28.86 2.56,25.41 5.29,24.63 6.65,25.83 6.09,29.51" fill="#bbbd95"/><polygon points="50.61,29.8 47.47,28.86 47.7,25.41 50.43,24.63 51.79,25.83 51.23,29.51" fill="#bbbd95"/><polygon points="3.7,34.21 2.35,34.96 0.22,33.95 0.1,30.7 1.93,29.66 5.07,30.6" fill="#bbbd95"/><polygon points="48.84,34.21 47.49,34.96 45.36,33.95 45.24,30.7 47.07,29.66 50.21,30.6" fill="#bbbd95"/><polygon points="4.89,39.85 3.18,38.53 2.78,35.77 4.13,35.02 7.49,36.07 7.08,39.21" fill="#bbbd95"/><polygon points="2.7,-5.81 4.4,-4.49 3.81,-0.6 0.13,-0.68 0.12,-0.7 0.12,-4.31" fill="#bbbd95"/><polygon points="2.7,39.33 4.4,40.65 3.81,44.54 0.13,44.46 0.12,44.44 0.12,40.83" fill="#bbbd95"/><polygon points="47.84,-5.81 49.54,-4.49 48.95,-0.6 45.27,-0.68 45.26,-0.7 45.26,-4.31" fill="#bbbd95"/><polygon points="47.84,39.33 49.54,40.65 48.95,44.54 45.27,44.46 45.26,44.44 45.26,40.83" fill="#bbbd95"/><polygon points="10.56,4.4 8.05,5.59 5.58,3.83 5.62,1.2 9.06,0.37" fill="#bbbd95"/><polygon points="10.56,49.54 8.05,50.73 5.58,48.97 5.62,46.34 9.06,45.51" fill="#bbbd95"/><polygon points="9.93,10.46 8.38,9.02 8.5,6.3 11.01,5.11 12.57,5.4 13.03,8.78" fill="#bbbd95"/><polygon points="7.46,14.7 5.05,14.27 4.41,10.73 7.85,9.79 9.4,11.23 9.47,13.21" fill="#bbbd95"/><polygon points="11.02,19.68 8.53,18.95 7.97,15.48 9.98,13.98 12.98,15.89 12.22,19.09" fill="#bbbd95"/><polygon points="9.99,24.61 7.16,25.05 5.8,23.86 5.91,21.1 8.13,19.8 10.62,20.53" fill="#bbbd95"/><polygon points="9.08,30.7 6.86,29.6 7.42,25.92 10.25,25.47 11.8,26.6 11.87,29.15" fill="#bbbd95"/><polygon points="7.84,35.32 4.48,34.28 5.84,30.66 6.47,30.38 8.69,31.47 9.16,34.36" fill="#bbbd95"/><polygon points="10.45,40.68 7.92,39.27 8.34,36.13 9.66,35.16 12.25,36.09 12.61,39.36" fill="#bbbd95"/><polygon points="9,-0.46 5.55,0.36 4.69,-0.5 5.28,-4.39 7.47,-5.03 10,-3.62 9.73,-1.28" fill="#bbbd95"/><polygon points="9,44.68 5.55,45.5 4.69,44.64 5.28,40.75 7.47,40.11 10,41.52 9.73,43.86" fill="#bbbd95"/><polygon points="14.06,3.66 12.82,4.55 11.25,4.26 9.75,0.23 10.48,-0.58 14.34,1.05" fill="#bbbd95"/><polygon points="14.06,48.8 12.82,49.69 11.25,49.4 9.75,45.37 10.48,44.56 14.34,46.19" fill="#bbbd95"/><polygon points="15.85,9.82 13.81,8.72 13.35,5.34 14.59,4.45 17.59,5.45 17.36,9.03" fill="#bbbd95"/><polygon points="15.26,14.25 13.39,15.11 10.39,13.21 10.33,11.24 13.43,9.56 15.47,10.65" fill="#bbbd95"/><polygon points="15.63,20.78 13.02,19.17 13.77,15.97 15.64,15.11 16.18,15.34 18.23,19.78" fill="#bbbd95"/><polygon points="12.33,25.79 10.78,24.67 11.41,20.59 12.61,20 15.23,21.61 14.98,24.64" fill="#bbbd95"/><polygon points="14.87,30.77 12.74,29.17 12.67,26.62 15.32,25.47 17.1,26.56 17.37,29.56" fill="#bbbd95"/><polygon points="12.56,35.29 9.97,34.36 9.5,31.47 12.29,29.92 14.42,31.52 14.22,33.85" fill="#bbbd95"/><polygon points="15.21,40 13.39,39.32 13.04,36.06 14.69,34.62 17.49,35.98 16.82,39.45" fill="#bbbd95"/><polygon points="14.52,0.31 10.66,-1.32 10.94,-3.67 13.1,-4.99 14.92,-4.32 15.34,-0.49" fill="#bbbd95"/><polygon points="14.52,45.45 10.66,43.82 10.94,41.47 13.1,40.15 14.92,40.82 15.34,44.65" fill="#bbbd95"/><polygon points="19.37,3.91 17.85,4.69 14.85,3.69 15.13,1.07 15.95,0.27 19.11,0.47" fill="#bbbd95"/><polygon points="19.37,49.05 17.85,49.83 14.85,48.83 15.13,46.21 15.95,45.41 19.11,45.61" fill="#bbbd95"/><polygon points="20.56,9.75 18.12,9.06 18.35,5.48 19.87,4.7 22.44,5.64 21.71,9.27" fill="#bbbd95"/><polygon points="19.82,14.07 16.56,14.48 16.01,14.25 16.22,10.65 17.73,9.86 20.18,10.55" fill="#bbbd95"/><polygon points="19.62,19.86 18.92,19.74 16.88,15.31 20.14,14.89 21.57,15.98 21.56,19.07" fill="#bbbd95"/><polygon points="19.65,24.7 17.55,25.76 15.77,24.67 16.02,21.63 18.61,20.63 19.3,20.75" fill="#bbbd95"/><polygon points="20.24,30.44 18.2,29.55 17.93,26.54 20.03,25.49 22.38,26.36 22.49,29.23" fill="#bbbd95"/><polygon points="19.91,34.43 17.89,35.21 15.1,33.85 15.29,31.53 17.79,30.32 19.83,31.21" fill="#bbbd95"/><polygon points="20.31,40.48 17.63,39.51 18.3,36.04 20.32,35.26 22.42,36.73 22.15,39.56" fill="#bbbd95"/><polygon points="19.25,-0.28 16.09,-0.49 15.67,-4.31 17.28,-4.86 19.95,-3.88 19.48,-0.52" fill="#bbbd95"/><polygon points="19.25,44.86 16.09,44.65 15.67,40.83 17.28,40.28 19.95,41.26 19.48,44.62" fill="#bbbd95"/><polygon points="24.51,4.06 22.74,4.85 20.17,3.92 19.91,0.48 20.14,0.25 24.88,0.85" fill="#bbbd95"/><polygon points="24.51,49.2 22.74,49.99 20.17,49.06 19.91,45.62 20.14,45.39 24.88,45.99" fill="#bbbd95"/><polygon points="24.7,10.57 22.48,9.31 23.21,5.68 24.98,4.89 27.17,6.34 27.48,8.7" fill="#bbbd95"/><polygon points="21.99,15.19 20.56,14.1 20.92,10.58 22.06,10.1 24.28,11.36 24.57,13.67" fill="#bbbd95"/><polygon points="24.29,19.97 22.35,19.05 22.36,15.97 24.95,14.45 27.31,15.76 27.25,19.01" fill="#bbbd95"/><polygon points="22.68,25.52 20.34,24.65 19.99,20.69 21.93,19.9 23.87,20.82 23.88,24.4" fill="#bbbd95"/><polygon points="25.23,30.12 23.29,29.17 23.18,26.31 24.38,25.19 27.73,26.05 27.63,28.69" fill="#bbbd95"/><polygon points="25.6,34.46 22.87,35.92 20.76,34.44 20.68,31.22 22.92,30.01 24.86,30.95" fill="#bbbd95"/><polygon points="24.56,40.65 22.94,39.54 23.22,36.72 25.96,35.26 26.57,35.48 27.79,39.26" fill="#bbbd95"/><polygon points="25.04,0.13 20.29,-0.48 20.77,-3.84 22.6,-4.77 24.21,-3.66 25.24,-0.16" fill="#bbbd95"/><polygon points="25.04,45.27 20.29,44.66 20.77,41.3 22.6,40.37 24.21,41.48 25.24,44.98" fill="#bbbd95"/><polygon points="29.99,4.31 27.59,5.47 25.4,4.02 25.77,0.81 25.97,0.53 29.3,-0.1 29.38,-0.03" fill="#bbbd95"/><polygon points="29.99,49.45 27.59,50.61 25.4,49.16 25.77,45.95 25.97,45.67 29.3,45.04 29.38,45.11" fill="#bbbd95"/><polygon points="30.36,10.23 28.36,8.69 28.06,6.34 30.46,5.17 33.32,5.65 32.7,9.18" fill="#bbbd95"/><polygon points="27.77,14.95 25.41,13.64 25.12,11.33 27.9,9.46 29.9,10.99 29.71,13.55" fill="#bbbd95"/><polygon points="29.71,20.09 28.11,19.02 28.16,15.77 30.11,14.37 33,15.83 31.59,19.53" fill="#bbbd95"/><polygon points="28.06,25.25 24.71,24.39 24.7,20.8 27.66,19.84 29.26,20.91 29.33,24.12" fill="#bbbd95"/><polygon points="31.1,30.18 28.45,28.69 28.55,26.05 29.82,24.92 31.86,25.82 32.38,29.57" fill="#bbbd95"/><polygon points="29.94,33.88 27.02,34.61 26.41,34.39 25.67,30.88 28.06,29.46 30.72,30.95" fill="#bbbd95"/><polygon points="30.22,39.95 28.59,39.2 27.37,35.43 30.29,34.7 32.41,36.6 32.2,38.93" fill="#bbbd95"/><polygon points="29.3,-0.91 25.98,-0.28 24.95,-3.78 28.19,-5.17 29.82,-4.43" fill="#bbbd95"/><polygon points="29.3,44.23 25.98,44.86 24.95,41.36 28.19,39.97 29.82,40.71" fill="#bbbd95"/><polygon points="34.69,4.22 33.69,4.9 30.82,4.43 30.21,0.09 34.66,0.78" fill="#bbbd95"/><polygon points="34.69,49.36 33.69,50.04 30.82,49.57 30.21,45.23 34.66,45.92" fill="#bbbd95"/><polygon points="35.47,10.52 33.5,9.17 34.12,5.63 35.13,4.96 37.05,5.7 37.97,8.8" fill="#bbbd95"/><polygon points="35.61,14.5 33.47,15.05 30.59,13.59 30.77,11.04 33.11,9.99 35.08,11.34" fill="#bbbd95"/><polygon points="34.65,20.54 32.4,19.58 33.81,15.88 35.94,15.33 37.17,15.98 37.18,19.36" fill="#bbbd95"/><polygon points="34.34,24.23 32.15,25.04 30.1,24.14 30.03,20.93 31.91,20.37 34.16,21.33" fill="#bbbd95"/><polygon points="35,29.85 33.11,29.57 32.59,25.82 34.78,25.01 37.14,26.37 36.72,28.63" fill="#bbbd95"/><polygon points="35.5,34.37 32.87,35.84 30.75,33.94 31.53,31.01 32.81,30.4 34.71,30.68" fill="#bbbd95"/><polygon points="35.29,40.51 33.05,38.97 33.25,36.64 35.89,35.18 37.86,35.85 37.32,39.27" fill="#bbbd95"/><polygon points="34.63,-0.04 30.18,-0.74 30.09,-0.8 30.61,-4.33 32.59,-5.35 34.83,-3.8 35.24,-0.83" fill="#bbbd95"/><polygon points="34.63,45.1 30.18,44.4 30.09,44.34 30.61,40.81 32.59,39.79 34.83,41.34 35.24,44.31" fill="#bbbd95"/><polygon points="39.82,3.92 37.32,4.87 35.39,4.12 35.36,0.68 35.97,-0.11 39.39,-0.04" fill="#bbbd95"/><polygon points="39.82,49.06 37.32,50.01 35.39,49.26 35.36,45.82 35.97,45.03 39.39,45.1" fill="#bbbd95"/><polygon points="-4.3,9.72 -6.42,8.77 -7.34,5.67 -4.84,4.72 -3.11,5.25 -3.43,9.47" fill="#bbbd95"/><polygon points="40.84,9.72 38.72,8.77 37.8,5.67 40.3,4.72 42.03,5.25 41.71,9.47" fill="#bbbd95"/><polygon points="38.75,14.76 37.61,15.16 36.38,14.51 35.85,11.36 38.35,9.64 40.46,10.59" fill="#bbbd95"/><polygon points="-5.48,20.88 -7.2,19.37 -7.21,15.99 -6.06,15.59 -3.03,16.43 -2.24,19.03" fill="#bbbd95"/><polygon points="39.66,20.88 37.94,19.37 37.93,15.99 39.08,15.59 42.11,16.43 42.9,19.03" fill="#bbbd95"/><polygon points="37.52,25.63 35.17,24.27 34.99,21.37 37.52,20.18 39.24,21.69 39.45,24.31" fill="#bbbd95"/><polygon points="-5.29,30.17 -7.61,28.63 -7.19,26.36 -5.27,25.05 -3.26,25.82 -2.48,29.03" fill="#bbbd95"/><polygon points="39.85,30.17 37.53,28.63 37.95,26.36 39.87,25.05 41.88,25.82 42.66,29.03" fill="#bbbd95"/><polygon points="39.6,34.53 38.22,35.01 36.25,34.34 35.45,30.64 37.17,29.42 39.49,30.97" fill="#bbbd95"/><polygon points="40.48,40.28 38.08,39.25 38.62,35.82 40,35.35 41.86,35.94 42.13,38.91" fill="#bbbd95"/><polygon points="40.28,-1.32 39.56,-0.83 36.14,-0.9 35.74,-3.87 37.77,-5.11 40.18,-4.09" fill="#bbbd95"/><polygon points="40.28,43.82 39.56,44.31 36.14,44.24 35.74,41.27 37.77,40.03 40.18,41.05" fill="#bbbd95"/><polygon points="-0.61,0 -0.6,0.01 -1.38,3.77 -2.75,4.34 -4.48,3.82 -4.92,-0.14 -4.2,-0.64" fill="#bbbd95"/><polygon points="-0.61,45.14 -0.6,45.15 -1.38,48.91 -2.75,49.48 -4.48,48.96 -4.92,45 -4.2,44.5" fill="#bbbd95"/><polygon points="44.53,0 44.54,0.01 43.76,3.77 42.39,4.34 40.66,3.82 40.22,-0.14 40.94,-0.64" fill="#bbbd95"/><polygon points="44.53,45.14 44.54,45.15 43.76,48.91 42.39,49.48 40.66,48.96 40.22,45 40.94,44.5" fill="#bbbd95"/><polygon points="-1.04,4.72 1.74,6.41 1.71,9.11 -0.68,10.33 -2.74,9.52 -2.41,5.3" fill="#bbbd95"/><polygon points="44.1,4.72 46.88,6.41 46.85,9.11 44.46,10.33 42.4,9.52 42.73,5.3" fill="#bbbd95"/><polygon points="-1.06,11.16 -0.98,13.99 -2.66,15.6 -5.7,14.77 -3.98,10.6 -3.11,10.35" fill="#bbbd95"/><polygon points="44.08,11.16 44.16,13.99 42.48,15.6 39.44,14.77 41.16,10.6 42.03,10.35" fill="#bbbd95"/><polygon points="-0.49,14.74 2.67,16.09 2.34,18.68 0.01,19.67 -1.38,18.96 -2.17,16.35" fill="#bbbd95"/><polygon points="44.65,14.74 47.81,16.09 47.48,18.68 45.15,19.67 43.76,18.96 42.97,16.35" fill="#bbbd95"/><polygon points="-0.43,20.48 -0.32,23.76 -2.83,25.02 -4.85,24.24 -5.06,21.62 -1.82,19.77" fill="#bbbd95"/><polygon points="44.71,20.48 44.82,23.76 42.31,25.02 40.29,24.24 40.08,21.62 43.32,19.77" fill="#bbbd95"/><polygon points="0.06,24.52 1.78,25.39 1.55,28.84 -0.28,29.88 -1.68,28.98 -2.45,25.78" fill="#bbbd95"/><polygon points="45.2,24.52 46.92,25.39 46.69,28.84 44.86,29.88 43.46,28.98 42.69,25.78" fill="#bbbd95"/><polygon points="-0.68,30.73 -0.56,33.98 -2.91,35.13 -4.77,34.54 -4.88,30.97 -2.08,29.83" fill="#bbbd95"/><polygon points="44.46,30.73 44.58,33.98 42.23,35.13 40.37,34.54 40.26,30.97 43.06,29.83" fill="#bbbd95"/><polygon points="-0.16,34.74 1.97,35.75 2.38,38.51 -0.2,40.01 -2.24,38.86 -2.51,35.89" fill="#bbbd95"/><polygon points="44.98,34.74 47.11,35.75 47.52,38.51 44.94,40.01 42.9,38.86 42.63,35.89" fill="#bbbd95"/><polygon points="-0.57,-4.39 -0.57,-0.77 -4.15,-1.41 -4.25,-4.18 -2.61,-5.54" fill="#bbbd95"/><polygon points="-0.57,40.75 -0.57,44.37 -4.15,43.73 -4.25,40.96 -2.61,39.6" fill="#bbbd95"/><polygon points="44.57,-4.39 44.57,-0.77 40.99,-1.41 40.89,-4.18 42.53,-5.54" fill="#bbbd95"/><polygon points="44.57,40.75 44.57,44.37 40.99,43.73 40.89,40.96 42.53,39.6" fill="#bbbd95"/><polygon points="3.36,2.71 1.87,3.82 0.22,2.82 0.68,0.58 2.87,0.63 3.39,1.14" fill="#cdcfa7"/><polygon points="3.36,47.85 1.87,48.96 0.22,47.96 0.68,45.72 2.87,45.77 3.39,46.28" fill="#cdcfa7"/><polygon points="48.5,2.71 47.01,3.82 45.36,2.82 45.82,0.58 48.01,0.63 48.53,1.14" fill="#cdcfa7"/><polygon points="48.5,47.85 47.01,48.96 45.36,47.96 45.82,45.72 48.01,45.77 48.53,46.28" fill="#cdcfa7"/><polygon points="3.89,8.49 3.03,7.98 3.04,6.38 4.53,5.27 6,6.31 5.93,7.93" fill="#cdcfa7"/><polygon points="1.61,10.48 2.47,11 2.85,13.1 2.12,13.7 0.23,12.9 0.19,11.21" fill="#cdcfa7"/><polygon points="46.75,10.48 47.61,11 47.99,13.1 47.26,13.7 45.37,12.9 45.33,11.21" fill="#cdcfa7"/><polygon points="4.91,18.64 3.52,17.68 3.72,16.14 4.45,15.54 5.89,15.8 6.22,17.87" fill="#cdcfa7"/><polygon points="3.52,22.64 1.9,23.11 0.88,22.59 0.81,20.63 2.2,20.05 3.59,21" fill="#cdcfa7"/><polygon points="48.66,22.64 47.04,23.11 46.02,22.59 45.95,20.63 47.34,20.05 48.73,21" fill="#cdcfa7"/><polygon points="4.67,28.3 2.8,27.74 2.94,25.69 4.56,25.23 5.37,25.94 5.04,28.13" fill="#cdcfa7"/><polygon points="49.81,28.3 47.94,27.74 48.08,25.69 49.7,25.23 50.51,25.94 50.18,28.13" fill="#cdcfa7"/><polygon points="2.6,32.96 1.8,33.4 0.53,32.8 0.46,30.86 1.55,30.25 3.42,30.81" fill="#cdcfa7"/><polygon points="47.74,32.96 46.94,33.4 45.67,32.8 45.6,30.86 46.69,30.25 48.56,30.81" fill="#cdcfa7"/><polygon points="4.4,38.36 3.39,37.58 3.15,35.93 3.95,35.49 5.95,36.11 5.71,37.98" fill="#cdcfa7"/><polygon points="1.87,-5.08 2.88,-4.29 2.53,-1.98 0.34,-2.03 0.33,-2.03 0.33,-4.19" fill="#cdcfa7"/><polygon points="1.87,40.06 2.88,40.85 2.53,43.16 0.34,43.11 0.33,43.11 0.33,40.95" fill="#cdcfa7"/><polygon points="47.01,-5.08 48.02,-4.29 47.67,-1.98 45.48,-2.03 45.47,-2.03 45.47,-4.19" fill="#cdcfa7"/><polygon points="47.01,40.06 48.02,40.85 47.67,43.16 45.48,43.11 45.47,43.11 45.47,40.95" fill="#cdcfa7"/><polygon points="8.93,3.37 7.44,4.07 5.97,3.03 5.99,1.46 8.04,0.97" fill="#cdcfa7"/><polygon points="8.93,48.51 7.44,49.21 5.97,48.17 5.99,46.6 8.04,46.11" fill="#cdcfa7"/><polygon points="9.69,8.77 8.76,7.91 8.84,6.29 10.33,5.58 11.26,5.76 11.54,7.77" fill="#cdcfa7"/><polygon points="6.88,13.24 5.45,12.98 5.07,10.87 7.12,10.31 8.04,11.17 8.08,12.35" fill="#cdcfa7"/><polygon points="10.29,18.17 8.81,17.73 8.47,15.66 9.67,14.78 11.45,15.91 11,17.81" fill="#cdcfa7"/><polygon points="8.66,23.25 6.98,23.51 6.17,22.8 6.23,21.16 7.55,20.39 9.03,20.82" fill="#cdcfa7"/><polygon points="8.77,29.07 7.45,28.42 7.78,26.22 9.46,25.96 10.39,26.63 10.43,28.15" fill="#cdcfa7"/><polygon points="7.03,33.78 5.03,33.16 5.84,31.01 6.22,30.83 7.54,31.49 7.82,33.21" fill="#cdcfa7"/><polygon points="9.85,39.01 8.35,38.17 8.6,36.3 9.38,35.72 10.92,36.28 11.14,38.22" fill="#cdcfa7"/><polygon points="7.85,-1.64 5.8,-1.15 5.28,-1.66 5.63,-3.98 6.94,-4.36 8.44,-3.52 8.28,-2.12" fill="#cdcfa7"/><polygon points="7.85,43.5 5.8,43.99 5.28,43.48 5.63,41.16 6.94,40.78 8.44,41.62 8.28,43.02" fill="#cdcfa7"/><polygon points="12.77,2.57 12.04,3.1 11.1,2.92 10.21,0.53 10.65,0.04 12.94,1.01" fill="#cdcfa7"/><polygon points="12.77,47.71 12.04,48.24 11.1,48.06 10.21,45.67 10.65,45.18 12.94,46.15" fill="#cdcfa7"/><polygon points="15.18,8.24 13.96,7.58 13.69,5.57 14.43,5.04 16.21,5.64 16.08,7.77" fill="#cdcfa7"/><polygon points="13.86,12.98 12.75,13.49 10.97,12.36 10.93,11.18 12.77,10.18 13.99,10.84" fill="#cdcfa7"/><polygon points="15.04,19.03 13.49,18.07 13.93,16.17 15.04,15.65 15.37,15.79 16.59,18.43" fill="#cdcfa7"/><polygon points="12.06,24.12 11.14,23.45 11.51,21.02 12.23,20.67 13.78,21.63 13.63,23.43" fill="#cdcfa7"/><polygon points="14.43,29.16 13.16,28.21 13.12,26.69 14.69,26 15.75,26.65 15.91,28.44" fill="#cdcfa7"/><polygon points="11.9,33.75 10.36,33.2 10.08,31.48 11.74,30.56 13,31.51 12.89,32.9" fill="#cdcfa7"/><polygon points="14.67,38.52 13.59,38.12 13.37,36.17 14.36,35.32 16.03,36.13 15.63,38.19" fill="#cdcfa7"/><polygon points="13.51,-1.29 11.21,-2.26 11.37,-3.66 12.66,-4.45 13.74,-4.05 13.99,-1.77" fill="#cdcfa7"/><polygon points="13.51,43.85 11.21,42.88 11.37,41.48 12.66,40.69 13.74,41.09 13.99,43.37" fill="#cdcfa7"/><polygon points="17.93,2.78 17.02,3.24 15.24,2.64 15.4,1.09 15.89,0.61 17.77,0.73" fill="#cdcfa7"/><polygon points="17.93,47.92 17.02,48.38 15.24,47.78 15.4,46.23 15.89,45.75 17.77,45.87" fill="#cdcfa7"/><polygon points="19.91,8.27 18.45,7.86 18.59,5.72 19.5,5.26 21.03,5.82 20.59,7.98" fill="#cdcfa7"/><polygon points="18.48,12.86 16.54,13.1 16.22,12.96 16.34,10.82 17.24,10.35 18.7,10.76" fill="#cdcfa7"/><polygon points="19.18,18.4 18.77,18.33 17.56,15.69 19.5,15.44 20.34,16.09 20.34,17.92" fill="#cdcfa7"/><polygon points="18.41,23.52 17.16,24.15 16.1,23.5 16.25,21.69 17.79,21.1 18.2,21.17" fill="#cdcfa7"/><polygon points="19.73,28.93 18.51,28.39 18.35,26.61 19.6,25.98 21,26.5 21.06,28.21" fill="#cdcfa7"/><polygon points="18.49,33.25 17.29,33.72 15.62,32.91 15.74,31.53 17.22,30.81 18.44,31.34" fill="#cdcfa7"/><polygon points="19.76,38.95 18.17,38.37 18.57,36.3 19.76,35.84 21.02,36.72 20.85,38.4" fill="#cdcfa7"/><polygon points="18.23,-1.64 16.35,-1.76 16.09,-4.04 17.05,-4.36 18.65,-3.78 18.36,-1.78" fill="#cdcfa7"/><polygon points="18.23,43.5 16.35,43.38 16.09,41.1 17.05,40.78 18.65,41.36 18.36,43.36" fill="#cdcfa7"/><polygon points="23.02,2.89 21.97,3.36 20.44,2.8 20.28,0.76 20.42,0.62 23.24,0.98" fill="#cdcfa7"/><polygon points="23.02,48.03 21.97,48.5 20.44,47.94 20.28,45.9 20.42,45.76 23.24,46.12" fill="#cdcfa7"/><polygon points="24.32,8.86 23,8.11 23.44,5.95 24.49,5.48 25.8,6.35 25.98,7.75" fill="#cdcfa7"/><polygon points="21.65,13.6 20.8,12.95 21.02,10.86 21.7,10.57 23.02,11.32 23.19,12.69" fill="#cdcfa7"/><polygon points="23.98,18.42 22.82,17.87 22.83,16.03 24.37,15.13 25.77,15.91 25.74,17.85" fill="#cdcfa7"/><polygon points="21.95,23.86 20.56,23.34 20.35,20.99 21.51,20.52 22.66,21.06 22.67,23.2" fill="#cdcfa7"/><polygon points="24.73,28.59 23.58,28.03 23.51,26.33 24.23,25.66 26.22,26.18 26.16,27.75" fill="#cdcfa7"/><polygon points="24.03,33.31 22.4,34.17 21.14,33.29 21.1,31.38 22.43,30.66 23.59,31.22" fill="#cdcfa7"/><polygon points="24.31,39.01 23.35,38.34 23.51,36.66 25.14,35.8 25.51,35.93 26.23,38.18" fill="#cdcfa7"/><polygon points="23.72,-1.28 20.9,-1.65 21.18,-3.65 22.27,-4.2 23.23,-3.54 23.84,-1.46" fill="#cdcfa7"/><polygon points="23.72,43.86 20.9,43.49 21.18,41.49 22.27,40.94 23.23,41.6 23.84,43.68" fill="#cdcfa7"/><polygon points="28.54,2.93 27.11,3.63 25.81,2.76 26.03,0.85 26.15,0.68 28.12,0.31 28.17,0.35" fill="#cdcfa7"/><polygon points="28.54,48.07 27.11,48.77 25.81,47.9 26.03,45.99 26.15,45.82 28.12,45.45 28.17,45.49" fill="#cdcfa7"/><polygon points="29.94,8.64 28.75,7.73 28.57,6.33 29.99,5.63 31.7,5.91 31.33,8.02" fill="#cdcfa7"/><polygon points="27.21,13.39 25.81,12.6 25.64,11.23 27.29,10.11 28.48,11.03 28.37,12.55" fill="#cdcfa7"/><polygon points="29.37,18.52 28.42,17.88 28.45,15.94 29.61,15.11 31.33,15.98 30.49,18.18" fill="#cdcfa7"/><polygon points="27.24,23.66 25.25,23.14 25.24,21.01 27.01,20.44 27.96,21.07 28,22.99" fill="#cdcfa7"/><polygon points="30.3,28.61 28.72,27.72 28.78,26.15 29.54,25.48 30.76,26.01 31.07,28.25" fill="#cdcfa7"/><polygon points="28.64,32.77 26.9,33.2 26.54,33.07 26.1,30.98 27.52,30.13 29.11,31.02" fill="#cdcfa7"/><polygon points="29.71,38.44 28.74,38 28.01,35.75 29.75,35.32 31.01,36.45 30.89,37.84" fill="#cdcfa7"/><polygon points="28.13,-2.22 26.15,-1.85 25.54,-3.93 27.47,-4.76 28.44,-4.32" fill="#cdcfa7"/><polygon points="28.13,42.92 26.15,43.29 25.54,41.21 27.47,40.38 28.44,40.82" fill="#cdcfa7"/><polygon points="33.43,3.18 32.83,3.59 31.13,3.3 30.77,0.72 33.41,1.13" fill="#cdcfa7"/><polygon points="33.43,48.32 32.83,48.73 31.13,48.44 30.77,45.86 33.41,46.27" fill="#cdcfa7"/><polygon points="35,8.79 33.83,7.98 34.2,5.88 34.79,5.47 35.94,5.92 36.49,7.76" fill="#cdcfa7"/><polygon points="34.1,13.22 32.83,13.55 31.11,12.68 31.22,11.16 32.61,10.54 33.78,11.35" fill="#cdcfa7"/><polygon points="34.37,18.93 33.03,18.35 33.87,16.15 35.14,15.82 35.87,16.21 35.87,18.22" fill="#cdcfa7"/><polygon points="32.94,23.1 31.63,23.58 30.42,23.05 30.37,21.14 31.49,20.8 32.83,21.37" fill="#cdcfa7"/><polygon points="34.46,28.42 33.33,28.25 33.02,26.02 34.32,25.53 35.73,26.34 35.48,27.69" fill="#cdcfa7"/><polygon points="34,33.2 32.43,34.07 31.17,32.94 31.63,31.19 32.4,30.83 33.53,31" fill="#cdcfa7"/><polygon points="34.85,38.89 33.52,37.97 33.64,36.58 35.21,35.71 36.38,36.11 36.06,38.15" fill="#cdcfa7"/><polygon points="33.3,-1.44 30.66,-1.86 30.6,-1.9 30.91,-4 32.09,-4.6 33.43,-3.68 33.67,-1.91" fill="#cdcfa7"/><polygon points="33.3,43.7 30.66,43.28 30.6,43.24 30.91,41.14 32.09,40.54 33.43,41.46 33.67,43.23" fill="#cdcfa7"/><polygon points="38.26,2.74 36.77,3.3 35.63,2.86 35.61,0.81 35.97,0.34 38,0.38" fill="#cdcfa7"/><polygon points="38.26,47.88 36.77,48.44 35.63,48 35.61,45.95 35.97,45.48 38,45.52" fill="#cdcfa7"/><polygon points="-5.05,8.23 -6.3,7.66 -6.85,5.82 -5.36,5.25 -4.33,5.57 -4.53,8.08" fill="#cdcfa7"/><polygon points="40.09,8.23 38.84,7.66 38.29,5.82 39.78,5.25 40.81,5.57 40.61,8.08" fill="#cdcfa7"/><polygon points="37.91,13.41 37.23,13.65 36.49,13.27 36.18,11.39 37.67,10.36 38.93,10.93" fill="#cdcfa7"/><polygon points="-5.87,19.17 -6.89,18.27 -6.9,16.26 -6.22,16.02 -4.41,16.52 -3.94,18.07" fill="#cdcfa7"/><polygon points="39.27,19.17 38.25,18.27 38.24,16.26 38.92,16.02 40.73,16.52 41.2,18.07" fill="#cdcfa7"/><polygon points="36.94,24.02 35.54,23.21 35.43,21.49 36.94,20.78 37.96,21.68 38.08,23.24" fill="#cdcfa7"/><polygon points="-5.75,28.59 -7.13,27.67 -6.88,26.33 -5.73,25.54 -4.54,26.01 -4.08,27.91" fill="#cdcfa7"/><polygon points="39.39,28.59 38.01,27.67 38.26,26.33 39.41,25.54 40.6,26.01 41.06,27.91" fill="#cdcfa7"/><polygon points="38.33,33.21 37.51,33.49 36.33,33.09 35.86,30.89 36.88,30.16 38.26,31.08" fill="#cdcfa7"/><polygon points="39.87,38.69 38.44,38.08 38.76,36.04 39.58,35.76 40.69,36.11 40.85,37.88" fill="#cdcfa7"/><polygon points="38.97,-2.37 38.54,-2.08 36.51,-2.12 36.27,-3.89 37.48,-4.63 38.91,-4.02" fill="#cdcfa7"/><polygon points="38.97,42.77 38.54,43.06 36.51,43.02 36.27,41.25 37.48,40.51 38.91,41.12" fill="#cdcfa7"/><polygon points="-1.96,0.15 -1.95,0.15 -2.42,2.39 -3.23,2.73 -4.26,2.42 -4.52,0.06 -4.09,-0.23" fill="#cdcfa7"/><polygon points="-1.96,45.29 -1.95,45.29 -2.42,47.53 -3.23,47.87 -4.26,47.56 -4.52,45.2 -4.09,44.91" fill="#cdcfa7"/><polygon points="43.18,0.15 43.19,0.15 42.72,2.39 41.91,2.73 40.88,2.42 40.62,0.06 41.05,-0.23" fill="#cdcfa7"/><polygon points="43.18,45.29 43.19,45.29 42.72,47.53 41.91,47.87 40.88,47.56 40.62,45.2 41.05,44.91" fill="#cdcfa7"/><polygon points="-1.35,5.37 0.31,6.38 0.29,7.98 -1.14,8.71 -2.36,8.23 -2.17,5.72" fill="#cdcfa7"/><polygon points="43.79,5.37 45.45,6.38 45.43,7.98 44,8.71 42.78,8.23 42.97,5.72" fill="#cdcfa7"/><polygon points="-2.31,11.3 -2.26,12.99 -3.26,13.95 -5.07,13.45 -4.05,10.97 -3.53,10.82" fill="#cdcfa7"/><polygon points="42.83,11.3 42.88,12.99 41.88,13.95 40.07,13.45 41.09,10.97 41.61,10.82" fill="#cdcfa7"/><polygon points="-0.73,15.32 1.16,16.13 0.96,17.67 -0.43,18.26 -1.26,17.83 -1.72,16.28" fill="#cdcfa7"/><polygon points="44.41,15.32 46.3,16.13 46.1,17.67 44.71,18.26 43.88,17.83 43.42,16.28" fill="#cdcfa7"/><polygon points="-1.79,20.79 -1.72,22.74 -3.22,23.49 -4.42,23.03 -4.54,21.47 -2.62,20.37" fill="#cdcfa7"/><polygon points="43.35,20.79 43.42,22.74 41.92,23.49 40.72,23.03 40.6,21.47 42.52,20.37" fill="#cdcfa7"/><polygon points="-0.53,25.12 0.49,25.64 0.35,27.69 -0.74,28.31 -1.57,27.78 -2.03,25.87" fill="#cdcfa7"/><polygon points="44.61,25.12 45.63,25.64 45.49,27.69 44.4,28.31 43.57,27.78 43.11,25.87" fill="#cdcfa7"/><polygon points="-1.98,30.96 -1.91,32.89 -3.3,33.58 -4.41,33.23 -4.48,31.1 -2.81,30.42" fill="#cdcfa7"/><polygon points="43.16,30.96 43.23,32.89 41.84,33.58 40.73,33.23 40.66,31.1 42.33,30.42" fill="#cdcfa7"/><polygon points="-0.65,35.28 0.62,35.88 0.86,37.52 -0.67,38.41 -1.88,37.73 -2.04,35.96" fill="#cdcfa7"/><polygon points="44.49,35.28 45.76,35.88 46,37.52 44.47,38.41 43.26,37.73 43.1,35.96" fill="#cdcfa7"/><polygon points="-1.82,-4.43 -1.82,-2.28 -3.96,-2.66 -4.02,-4.31 -3.03,-5.12" fill="#cdcfa7"/><polygon points="-1.82,40.71 -1.82,42.86 -3.96,42.48 -4.02,40.83 -3.03,40.02" fill="#cdcfa7"/><polygon points="43.32,-4.43 43.32,-2.28 41.18,-2.66 41.12,-4.31 42.11,-5.12" fill="#cdcfa7"/><polygon points="43.32,40.71 43.32,42.86 41.18,42.48 41.12,40.83 42.11,40.02" fill="#cdcfa7"/></pattern><pattern id="brick" x="89.93" y="303.4" width="11.29" height="11.4" patternUnits="userSpaceOnUse"><rect width="12" height="12" fill="#46442c"/><rect x="0.6" y="0.6" width="10.1" height="4.6" fill="#a09868"/><rect x="1.8" y="1.2" width="4" height="1" fill="#d4cea0"/><rect x="0.6" y="4.3" width="10.1" height="0.9" fill="#8c845a"/><rect x="-5.1" y="6.3" width="10.1" height="4.6" fill="#a09868"/><rect x="-3.9" y="6.9" width="4" height="1" fill="#d4cea0"/><rect x="-5.1" y="10" width="10.1" height="0.9" fill="#8c845a"/><rect x="6.2" y="6.3" width="10.1" height="4.6" fill="#a09868"/><rect x="7.4" y="6.9" width="4" height="1" fill="#d4cea0"/><rect x="6.2" y="10" width="10.1" height="0.9" fill="#8c845a"/></pattern><pattern id="brick2" x="487.4" y="222.6" width="7.8" height="7.4" patternUnits="userSpaceOnUse"><rect width="8" height="8" fill="#56543a"/><rect x="0.4" y="0.4" width="6.9" height="3" fill="#b4ab78"/><rect x="-3.5" y="4.1" width="6.9" height="3" fill="#b4ab78"/><rect x="4.3" y="4.1" width="6.9" height="3" fill="#b4ab78"/></pattern><pattern id="cobble" x="0" y="0" width="11" height="11" patternUnits="userSpaceOnUse"><rect width="12" height="12" fill="#b08660"/><ellipse cx="-9.53" cy="1.52" rx="1.14" ry="1.04" fill="#e4c49c"/><ellipse cx="1.47" cy="1.52" rx="1.12" ry="1.03" fill="#e4c49c"/><ellipse cx="12.47" cy="1.52" rx="0.91" ry="0.92" fill="#e4c49c"/><ellipse cx="-7.9" cy="4.21" rx="1.17" ry="0.83" fill="#e4c49c"/><ellipse cx="3.1" cy="4.21" rx="1.04" ry="0.86" fill="#e4c49c"/><ellipse cx="14.1" cy="4.21" rx="1.06" ry="0.94" fill="#e4c49c"/><ellipse cx="-10.01" cy="6.71" rx="0.98" ry="1.03" fill="#e4c49c"/><ellipse cx="0.99" cy="6.71" rx="1.13" ry="0.84" fill="#e4c49c"/><ellipse cx="11.99" cy="6.71" rx="1.14" ry="0.83" fill="#e4c49c"/><ellipse cx="-8.16" cy="9.4" rx="0.9" ry="1.02" fill="#e4c49c"/><ellipse cx="2.84" cy="9.4" rx="0.96" ry="0.85" fill="#e4c49c"/><ellipse cx="13.84" cy="9.4" rx="1.19" ry="1.02" fill="#e4c49c"/><ellipse cx="-7.04" cy="1.65" rx="1.06" ry="0.97" fill="#e4c49c"/><ellipse cx="3.96" cy="1.65" rx="0.96" ry="1.04" fill="#e4c49c"/><ellipse cx="14.96" cy="1.65" rx="1.11" ry="1.04" fill="#e4c49c"/><ellipse cx="-5.19" cy="4" rx="1.01" ry="0.84" fill="#e4c49c"/><ellipse cx="5.81" cy="4" rx="0.94" ry="0.82" fill="#e4c49c"/><ellipse cx="16.81" cy="4" rx="0.99" ry="0.95" fill="#e4c49c"/><ellipse cx="-7.27" cy="6.98" rx="1" ry="0.88" fill="#e4c49c"/><ellipse cx="3.73" cy="6.98" rx="1.15" ry="0.92" fill="#e4c49c"/><ellipse cx="14.73" cy="6.98" rx="0.99" ry="0.92" fill="#e4c49c"/><ellipse cx="-5.34" cy="9.36" rx="1.19" ry="0.81" fill="#e4c49c"/><ellipse cx="5.66" cy="9.36" rx="1.12" ry="1.01" fill="#e4c49c"/><ellipse cx="16.66" cy="9.36" rx="0.91" ry="1" fill="#e4c49c"/><ellipse cx="-4.23" cy="1.42" rx="0.9" ry="0.81" fill="#e4c49c"/><ellipse cx="6.77" cy="1.42" rx="0.95" ry="1.04" fill="#e4c49c"/><ellipse cx="17.77" cy="1.42" rx="0.96" ry="0.99" fill="#e4c49c"/><ellipse cx="-2.41" cy="4.39" rx="1" ry="0.89" fill="#e4c49c"/><ellipse cx="8.59" cy="4.39" rx="1.06" ry="0.99" fill="#e4c49c"/><ellipse cx="19.59" cy="4.39" rx="0.93" ry="0.99" fill="#e4c49c"/><ellipse cx="-3.89" cy="7.09" rx="0.91" ry="1.04" fill="#e4c49c"/><ellipse cx="7.11" cy="7.09" rx="0.93" ry="0.89" fill="#e4c49c"/><ellipse cx="18.11" cy="7.09" rx="1.08" ry="1.03" fill="#e4c49c"/><ellipse cx="-2.88" cy="9.88" rx="1.06" ry="0.88" fill="#e4c49c"/><ellipse cx="8.12" cy="9.88" rx="1" ry="0.84" fill="#e4c49c"/><ellipse cx="19.12" cy="9.88" rx="0.92" ry="0.84" fill="#e4c49c"/><ellipse cx="-1.22" cy="1.67" rx="0.95" ry="0.81" fill="#e4c49c"/><ellipse cx="9.78" cy="1.67" rx="1.2" ry="0.93" fill="#e4c49c"/><ellipse cx="20.78" cy="1.67" rx="1.02" ry="0.86" fill="#e4c49c"/><ellipse cx="0.08" cy="4.32" rx="1.04" ry="0.91" fill="#e4c49c"/><ellipse cx="11.08" cy="4.32" rx="0.92" ry="1.03" fill="#e4c49c"/><ellipse cx="22.08" cy="4.32" rx="0.91" ry="0.92" fill="#e4c49c"/><ellipse cx="-1.1" cy="6.65" rx="1.12" ry="1.04" fill="#e4c49c"/><ellipse cx="9.9" cy="6.65" rx="1.09" ry="1" fill="#e4c49c"/><ellipse cx="20.9" cy="6.65" rx="0.93" ry="0.91" fill="#e4c49c"/><ellipse cx="-0.28" cy="9.83" rx="0.99" ry="0.91" fill="#e4c49c"/><ellipse cx="10.72" cy="9.83" rx="1.2" ry="1.01" fill="#e4c49c"/><ellipse cx="21.72" cy="9.83" rx="1.19" ry="0.91" fill="#e4c49c"/></pattern></defs><g clip-path="url(#mc)"><rect x="95" y="64" width="358.8" height="329.1" fill="url(#sand)"/><rect x="234.3" y="69.4" width="245.7" height="209" fill="#b89a6a"/><rect x="235" y="70.1" width="245" height="207.6" fill="#e9eac6"/><rect x="235.9" y="71" width="244.1" height="205.8" fill="#f3f4d8"/><rect x="238.7" y="73.8" width="241.3" height="200.2" fill="#5f6244"/><rect x="239.9" y="75" width="240.1" height="197.8" fill="url(#stone)"/><rect x="239.9" y="75" width="240.1" height="1.2" fill="#7a7c5a" opacity="0.7"/><rect x="239.9" y="75" width="1.2" height="197.8" fill="#7a7c5a" opacity="0.7"/><rect x="280.55" y="114.9" width="50.15" height="73.8" fill="#7c7e5c"/><rect x="281.25" y="115.6" width="48.75" height="72.4" fill="#eceecc"/><rect x="282.05" y="116.4" width="47.15" height="70.8" fill="#f6f7de"/><rect x="284.85" y="119.8" width="41.55" height="64" fill="#8c8e6a"/><rect x="285.65" y="120.6" width="39.95" height="62.4" fill="url(#sand)"/><rect x="415.7" y="205.3" width="75" height="27.4" fill="#7c7e5c"/><rect x="416.4" y="206" width="73.6" height="26" fill="#eceecc"/><rect x="417.2" y="206.8" width="72" height="24.4" fill="#f6f7de"/><rect x="420" y="210.2" width="66.4" height="17.6" fill="#8c8e6a"/><rect x="420.8" y="211" width="64.8" height="16" fill="url(#sand)"/><rect x="80" y="297.3" width="179" height="45.5" fill="#55533c"/><rect x="82.2" y="303.4" width="174.6" height="34.2" fill="url(#brick)"/><rect x="81.2" y="298.6" width="8.05" height="3.6" fill="#878670"/><rect x="82.2" y="299.8" width="5" height="1" fill="#cfcfbc"/><rect x="90.73" y="298.6" width="9.8" height="3.6" fill="#878670"/><rect x="91.73" y="299.8" width="5" height="1" fill="#cfcfbc"/><rect x="102.02" y="298.6" width="9.8" height="3.6" fill="#878670"/><rect x="103.02" y="299.8" width="5" height="1" fill="#cfcfbc"/><rect x="113.3" y="298.6" width="9.8" height="3.6" fill="#878670"/><rect x="114.3" y="299.8" width="5" height="1" fill="#cfcfbc"/><rect x="124.59" y="298.6" width="9.8" height="3.6" fill="#878670"/><rect x="125.59" y="299.8" width="5" height="1" fill="#cfcfbc"/><rect x="135.87" y="298.6" width="9.8" height="3.6" fill="#878670"/><rect x="136.87" y="299.8" width="5" height="1" fill="#cfcfbc"/><rect x="147.16" y="298.6" width="9.8" height="3.6" fill="#878670"/><rect x="148.16" y="299.8" width="5" height="1" fill="#cfcfbc"/><rect x="158.44" y="298.6" width="9.8" height="3.6" fill="#878670"/><rect x="159.44" y="299.8" width="5" height="1" fill="#cfcfbc"/><rect x="169.73" y="298.6" width="9.8" height="3.6" fill="#878670"/><rect x="170.73" y="299.8" width="5" height="1" fill="#cfcfbc"/><rect x="181.01" y="298.6" width="9.8" height="3.6" fill="#878670"/><rect x="182.01" y="299.8" width="5" height="1" fill="#cfcfbc"/><rect x="192.3" y="298.6" width="9.8" height="3.6" fill="#878670"/><rect x="193.3" y="299.8" width="5" height="1" fill="#cfcfbc"/><rect x="203.58" y="298.6" width="9.8" height="3.6" fill="#878670"/><rect x="204.58" y="299.8" width="5" height="1" fill="#cfcfbc"/><rect x="214.87" y="298.6" width="9.8" height="3.6" fill="#878670"/><rect x="215.87" y="299.8" width="5" height="1" fill="#cfcfbc"/><rect x="226.15" y="298.6" width="9.8" height="3.6" fill="#878670"/><rect x="227.15" y="299.8" width="5" height="1" fill="#cfcfbc"/><rect x="237.44" y="298.6" width="9.8" height="3.6" fill="#878670"/><rect x="238.44" y="299.8" width="5" height="1" fill="#cfcfbc"/><rect x="248.72" y="298.6" width="9.08" height="3.6" fill="#878670"/><rect x="249.72" y="299.8" width="5" height="1" fill="#cfcfbc"/><rect x="81.2" y="338.2" width="8.05" height="3.6" fill="#878670"/><rect x="82.2" y="339.4" width="5" height="1" fill="#cfcfbc"/><rect x="90.73" y="338.2" width="9.8" height="3.6" fill="#878670"/><rect x="91.73" y="339.4" width="5" height="1" fill="#cfcfbc"/><rect x="102.02" y="338.2" width="9.8" height="3.6" fill="#878670"/><rect x="103.02" y="339.4" width="5" height="1" fill="#cfcfbc"/><rect x="113.3" y="338.2" width="9.8" height="3.6" fill="#878670"/><rect x="114.3" y="339.4" width="5" height="1" fill="#cfcfbc"/><rect x="124.59" y="338.2" width="9.8" height="3.6" fill="#878670"/><rect x="125.59" y="339.4" width="5" height="1" fill="#cfcfbc"/><rect x="135.87" y="338.2" width="9.8" height="3.6" fill="#878670"/><rect x="136.87" y="339.4" width="5" height="1" fill="#cfcfbc"/><rect x="147.16" y="338.2" width="9.8" height="3.6" fill="#878670"/><rect x="148.16" y="339.4" width="5" height="1" fill="#cfcfbc"/><rect x="158.44" y="338.2" width="9.8" height="3.6" fill="#878670"/><rect x="159.44" y="339.4" width="5" height="1" fill="#cfcfbc"/><rect x="169.73" y="338.2" width="9.8" height="3.6" fill="#878670"/><rect x="170.73" y="339.4" width="5" height="1" fill="#cfcfbc"/><rect x="181.01" y="338.2" width="9.8" height="3.6" fill="#878670"/><rect x="182.01" y="339.4" width="5" height="1" fill="#cfcfbc"/><rect x="192.3" y="338.2" width="9.8" height="3.6" fill="#878670"/><rect x="193.3" y="339.4" width="5" height="1" fill="#cfcfbc"/><rect x="203.58" y="338.2" width="9.8" height="3.6" fill="#878670"/><rect x="204.58" y="339.4" width="5" height="1" fill="#cfcfbc"/><rect x="214.87" y="338.2" width="9.8" height="3.6" fill="#878670"/><rect x="215.87" y="339.4" width="5" height="1" fill="#cfcfbc"/><rect x="226.15" y="338.2" width="9.8" height="3.6" fill="#878670"/><rect x="227.15" y="339.4" width="5" height="1" fill="#cfcfbc"/><rect x="237.44" y="338.2" width="9.8" height="3.6" fill="#878670"/><rect x="238.44" y="339.4" width="5" height="1" fill="#cfcfbc"/><rect x="248.72" y="338.2" width="9.08" height="3.6" fill="#878670"/><rect x="249.72" y="339.4" width="5" height="1" fill="#cfcfbc"/><rect x="80.5" y="297.8" width="1.7" height="44.5" fill="#7a7960"/><rect x="256.8" y="297.8" width="1.7" height="44.5" fill="#7a7960"/><rect x="281.8" y="297.3" width="198.2" height="45.5" fill="#55533c"/><rect x="284" y="303.4" width="193.8" height="34.2" fill="url(#brick)"/><rect x="283" y="298.6" width="9.38" height="3.6" fill="#878670"/><rect x="284" y="299.8" width="5" height="1" fill="#cfcfbc"/><rect x="293.86" y="298.6" width="9.8" height="3.6" fill="#878670"/><rect x="294.86" y="299.8" width="5" height="1" fill="#cfcfbc"/><rect x="305.15" y="298.6" width="9.8" height="3.6" fill="#878670"/><rect x="306.15" y="299.8" width="5" height="1" fill="#cfcfbc"/><rect x="316.43" y="298.6" width="9.8" height="3.6" fill="#878670"/><rect x="317.43" y="299.8" width="5" height="1" fill="#cfcfbc"/><rect x="327.72" y="298.6" width="9.8" height="3.6" fill="#878670"/><rect x="328.72" y="299.8" width="5" height="1" fill="#cfcfbc"/><rect x="339" y="298.6" width="9.8" height="3.6" fill="#878670"/><rect x="340" y="299.8" width="5" height="1" fill="#cfcfbc"/><rect x="350.29" y="298.6" width="9.8" height="3.6" fill="#878670"/><rect x="351.29" y="299.8" width="5" height="1" fill="#cfcfbc"/><rect x="361.57" y="298.6" width="9.8" height="3.6" fill="#878670"/><rect x="362.57" y="299.8" width="5" height="1" fill="#cfcfbc"/><rect x="372.86" y="298.6" width="9.8" height="3.6" fill="#878670"/><rect x="373.86" y="299.8" width="5" height="1" fill="#cfcfbc"/><rect x="384.14" y="298.6" width="9.8" height="3.6" fill="#878670"/><rect x="385.14" y="299.8" width="5" height="1" fill="#cfcfbc"/><rect x="395.43" y="298.6" width="9.8" height="3.6" fill="#878670"/><rect x="396.43" y="299.8" width="5" height="1" fill="#cfcfbc"/><rect x="406.71" y="298.6" width="9.8" height="3.6" fill="#878670"/><rect x="407.71" y="299.8" width="5" height="1" fill="#cfcfbc"/><rect x="418" y="298.6" width="9.8" height="3.6" fill="#878670"/><rect x="419" y="299.8" width="5" height="1" fill="#cfcfbc"/><rect x="429.28" y="298.6" width="9.8" height="3.6" fill="#878670"/><rect x="430.28" y="299.8" width="5" height="1" fill="#cfcfbc"/><rect x="440.56" y="298.6" width="9.8" height="3.6" fill="#878670"/><rect x="441.56" y="299.8" width="5" height="1" fill="#cfcfbc"/><rect x="451.85" y="298.6" width="9.8" height="3.6" fill="#878670"/><rect x="452.85" y="299.8" width="5" height="1" fill="#cfcfbc"/><rect x="463.14" y="298.6" width="9.8" height="3.6" fill="#878670"/><rect x="464.14" y="299.8" width="5" height="1" fill="#cfcfbc"/><rect x="474.42" y="298.6" width="4.38" height="3.6" fill="#878670"/><rect x="475.42" y="299.8" width="2.38" height="1" fill="#cfcfbc"/><rect x="283" y="338.2" width="9.38" height="3.6" fill="#878670"/><rect x="284" y="339.4" width="5" height="1" fill="#cfcfbc"/><rect x="293.86" y="338.2" width="9.8" height="3.6" fill="#878670"/><rect x="294.86" y="339.4" width="5" height="1" fill="#cfcfbc"/><rect x="305.15" y="338.2" width="9.8" height="3.6" fill="#878670"/><rect x="306.15" y="339.4" width="5" height="1" fill="#cfcfbc"/><rect x="316.43" y="338.2" width="9.8" height="3.6" fill="#878670"/><rect x="317.43" y="339.4" width="5" height="1" fill="#cfcfbc"/><rect x="327.72" y="338.2" width="9.8" height="3.6" fill="#878670"/><rect x="328.72" y="339.4" width="5" height="1" fill="#cfcfbc"/><rect x="339" y="338.2" width="9.8" height="3.6" fill="#878670"/><rect x="340" y="339.4" width="5" height="1" fill="#cfcfbc"/><rect x="350.29" y="338.2" width="9.8" height="3.6" fill="#878670"/><rect x="351.29" y="339.4" width="5" height="1" fill="#cfcfbc"/><rect x="361.57" y="338.2" width="9.8" height="3.6" fill="#878670"/><rect x="362.57" y="339.4" width="5" height="1" fill="#cfcfbc"/><rect x="372.86" y="338.2" width="9.8" height="3.6" fill="#878670"/><rect x="373.86" y="339.4" width="5" height="1" fill="#cfcfbc"/><rect x="384.14" y="338.2" width="9.8" height="3.6" fill="#878670"/><rect x="385.14" y="339.4" width="5" height="1" fill="#cfcfbc"/><rect x="395.43" y="338.2" width="9.8" height="3.6" fill="#878670"/><rect x="396.43" y="339.4" width="5" height="1" fill="#cfcfbc"/><rect x="406.71" y="338.2" width="9.8" height="3.6" fill="#878670"/><rect x="407.71" y="339.4" width="5" height="1" fill="#cfcfbc"/><rect x="418" y="338.2" width="9.8" height="3.6" fill="#878670"/><rect x="419" y="339.4" width="5" height="1" fill="#cfcfbc"/><rect x="429.28" y="338.2" width="9.8" height="3.6" fill="#878670"/><rect x="430.28" y="339.4" width="5" height="1" fill="#cfcfbc"/><rect x="440.56" y="338.2" width="9.8" height="3.6" fill="#878670"/><rect x="441.56" y="339.4" width="5" height="1" fill="#cfcfbc"/><rect x="451.85" y="338.2" width="9.8" height="3.6" fill="#878670"/><rect x="452.85" y="339.4" width="5" height="1" fill="#cfcfbc"/><rect x="463.14" y="338.2" width="9.8" height="3.6" fill="#878670"/><rect x="464.14" y="339.4" width="5" height="1" fill="#cfcfbc"/><rect x="474.42" y="338.2" width="4.38" height="3.6" fill="#878670"/><rect x="475.42" y="339.4" width="2.38" height="1" fill="#cfcfbc"/><rect x="282.3" y="297.8" width="1.7" height="44.5" fill="#7a7960"/><rect x="477.8" y="297.8" width="1.7" height="44.5" fill="#7a7960"/><path d="M112.5 64V393.1M135.5 64V393.1M157.5 64V393.1M180.5 64V393.1M202.5 64V393.1M225.5 64V393.1M247.5 64V393.1M270.5 64V393.1M293.5 64V393.1M315.5 64V393.1M338.5 64V393.1M360.5 64V393.1M383.5 64V393.1M405.5 64V393.1M428.5 64V393.1M451.5 64V393.1M95 83.5H453.8M95 105.5H453.8M95 128.5H453.8M95 151.5H453.8M95 173.5H453.8M95 196.5H453.8M95 218.5H453.8M95 241.5H453.8M95 263.5H453.8M95 286.5H453.8M95 309.5H453.8M95 331.5H453.8M95 354.5H453.8M95 376.5H453.8" stroke="#2a1c08" stroke-opacity="0.42" stroke-width="1" stroke-dasharray="1.3 1.5" fill="none"/><g transform="translate(113.1,106.37)"><ellipse cx="13" cy="19" rx="8.5" ry="2.4" fill="#d08850" opacity="0.6"/><path d="M1.4 17.6 Q1.6 15 2.4 13.8 Q0.6 11.6 1.2 10.2 Q2.6 10 3.8 10.8 Q2.4 6.4 3.2 4.4 Q5 4.8 6.4 6.8 Q6.6 2 8.2 1 Q10 2.4 10.8 5.4 Q13 2.4 15.2 2.2 Q15.8 4.6 15.2 7.4 Q17.8 6.8 19.6 7.8 Q19 10.6 17.6 12.2 Q19.6 13 19.8 14.2 Q18.8 16.4 17.8 17.4 L18.2 19 Q11 20.8 1.4 17.6Z" fill="#9cc43c" stroke="#32701a" stroke-width="1.1" stroke-linejoin="round"/><path d="M3.5 16.5 Q6 13 8.5 12" fill="none" stroke="#d4ea7c" stroke-width="1.5" stroke-linecap="round"/><path d="M3.6 11.4 Q7 12.6 9.4 15.6" fill="none" stroke="#d4ea7c" stroke-width="1.5" stroke-linecap="round"/><path d="M4 6 Q7.4 9 9.6 13.6" fill="none" stroke="#d4ea7c" stroke-width="1.5" stroke-linecap="round"/><path d="M7.8 2.2 Q9.6 7 10.6 12.6" fill="none" stroke="#d4ea7c" stroke-width="1.5" stroke-linecap="round"/><path d="M14.8 3.6 Q12.6 8 11.4 13" fill="none" stroke="#d4ea7c" stroke-width="1.5" stroke-linecap="round"/><path d="M18.4 8.6 Q14.6 11 12.4 15" fill="none" stroke="#d4ea7c" stroke-width="1.5" stroke-linecap="round"/><path d="M18.2 14.4 Q14.6 15.4 12.6 18" fill="none" stroke="#d4ea7c" stroke-width="1.5" stroke-linecap="round"/><path d="M6 17.6 Q8 14.6 10.4 13.8" fill="none" stroke="#32701a" stroke-width="0.8" opacity="0.75"/><path d="M11.6 17.6 Q12.4 14 15.6 11.4" fill="none" stroke="#32701a" stroke-width="0.8" opacity="0.75"/><path d="M6.4 10 Q8.4 11.8 9.2 14.4" fill="none" stroke="#32701a" stroke-width="0.8" opacity="0.75"/><path d="M12.2 6.2 Q11.4 9.6 11.2 12.4" fill="none" stroke="#32701a" stroke-width="0.8" opacity="0.75"/><path d="M4 18.2 Q10.5 16 17.6 18.2 Q11 20 4 18.2Z" fill="#32701a" opacity="0.9"/><circle cx="5.8" cy="8.6" r="0.8" fill="#f2fac8"/><circle cx="9.4" cy="5.4" r="0.8" fill="#f2fac8"/><circle cx="14.4" cy="9.2" r="0.7" fill="#f2fac8"/><circle cx="6.4" cy="15" r="0.7" fill="#f2fac8"/></g><g transform="translate(158.24,151.51)"><ellipse cx="13" cy="19" rx="8.5" ry="2.4" fill="#d08850" opacity="0.6"/><path d="M1.4 17.6 Q1.6 15 2.4 13.8 Q0.6 11.6 1.2 10.2 Q2.6 10 3.8 10.8 Q2.4 6.4 3.2 4.4 Q5 4.8 6.4 6.8 Q6.6 2 8.2 1 Q10 2.4 10.8 5.4 Q13 2.4 15.2 2.2 Q15.8 4.6 15.2 7.4 Q17.8 6.8 19.6 7.8 Q19 10.6 17.6 12.2 Q19.6 13 19.8 14.2 Q18.8 16.4 17.8 17.4 L18.2 19 Q11 20.8 1.4 17.6Z" fill="#7fa880" stroke="#28602e" stroke-width="1.1" stroke-linejoin="round"/><path d="M3.5 16.5 Q6 13 8.5 12" fill="none" stroke="#c6dcc6" stroke-width="1.5" stroke-linecap="round"/><path d="M3.6 11.4 Q7 12.6 9.4 15.6" fill="none" stroke="#c6dcc6" stroke-width="1.5" stroke-linecap="round"/><path d="M4 6 Q7.4 9 9.6 13.6" fill="none" stroke="#c6dcc6" stroke-width="1.5" stroke-linecap="round"/><path d="M7.8 2.2 Q9.6 7 10.6 12.6" fill="none" stroke="#c6dcc6" stroke-width="1.5" stroke-linecap="round"/><path d="M14.8 3.6 Q12.6 8 11.4 13" fill="none" stroke="#c6dcc6" stroke-width="1.5" stroke-linecap="round"/><path d="M18.4 8.6 Q14.6 11 12.4 15" fill="none" stroke="#c6dcc6" stroke-width="1.5" stroke-linecap="round"/><path d="M18.2 14.4 Q14.6 15.4 12.6 18" fill="none" stroke="#c6dcc6" stroke-width="1.5" stroke-linecap="round"/><path d="M6 17.6 Q8 14.6 10.4 13.8" fill="none" stroke="#28602e" stroke-width="0.8" opacity="0.75"/><path d="M11.6 17.6 Q12.4 14 15.6 11.4" fill="none" stroke="#28602e" stroke-width="0.8" opacity="0.75"/><path d="M6.4 10 Q8.4 11.8 9.2 14.4" fill="none" stroke="#28602e" stroke-width="0.8" opacity="0.75"/><path d="M12.2 6.2 Q11.4 9.6 11.2 12.4" fill="none" stroke="#28602e" stroke-width="0.8" opacity="0.75"/><path d="M4 18.2 Q10.5 16 17.6 18.2 Q11 20 4 18.2Z" fill="#28602e" opacity="0.9"/><circle cx="5.8" cy="8.6" r="0.8" fill="#eef4ee"/><circle cx="9.4" cy="5.4" r="0.8" fill="#eef4ee"/><circle cx="14.4" cy="9.2" r="0.7" fill="#eef4ee"/><circle cx="6.4" cy="15" r="0.7" fill="#eef4ee"/></g><g transform="translate(89.93,173.68)"><ellipse cx="12.6" cy="18.4" rx="8" ry="2.4" fill="#d08850" opacity="0.6"/><path d="M4.6 14 Q3.6 9.6 6.4 7.2 Q8.4 4.4 12 5 Q16.6 5 18 9 Q19.8 13.4 17.4 17 Q15 19.2 10.4 19 Q5.6 18.2 4.6 14Z" fill="#3f7e1e" stroke="#24520e" stroke-width="0.9"/><circle cx="8.4" cy="9.2" r="1.6" fill="#86b838"/><circle cx="8" cy="8.8" r="0.72" fill="#b8dc5c"/><circle cx="12" cy="7.8" r="1.5" fill="#86b838"/><circle cx="11.6" cy="7.4" r="0.68" fill="#b8dc5c"/><circle cx="15.2" cy="10" r="1.5" fill="#86b838"/><circle cx="14.8" cy="9.6" r="0.68" fill="#b8dc5c"/><circle cx="7" cy="13" r="1.4" fill="#86b838"/><circle cx="6.6" cy="12.6" r="0.63" fill="#b8dc5c"/><circle cx="10.6" cy="11.8" r="1.6" fill="#86b838"/><circle cx="10.2" cy="11.4" r="0.72" fill="#b8dc5c"/><circle cx="14" cy="13.6" r="1.5" fill="#86b838"/><circle cx="13.6" cy="13.2" r="0.68" fill="#b8dc5c"/><circle cx="9.4" cy="16" r="1.3" fill="#86b838"/><circle cx="9" cy="15.6" r="0.59" fill="#b8dc5c"/><circle cx="12.6" cy="16.4" r="1.2" fill="#86b838"/><circle cx="12.2" cy="16" r="0.54" fill="#b8dc5c"/><circle cx="16.4" cy="14.8" r="1" fill="#86b838"/><circle cx="16" cy="14.4" r="0.45" fill="#b8dc5c"/></g><g transform="translate(113.1,174.08)"><ellipse cx="13" cy="19" rx="8.5" ry="2.4" fill="#d08850" opacity="0.6"/><path d="M1.4 17.6 Q1.6 15 2.4 13.8 Q0.6 11.6 1.2 10.2 Q2.6 10 3.8 10.8 Q2.4 6.4 3.2 4.4 Q5 4.8 6.4 6.8 Q6.6 2 8.2 1 Q10 2.4 10.8 5.4 Q13 2.4 15.2 2.2 Q15.8 4.6 15.2 7.4 Q17.8 6.8 19.6 7.8 Q19 10.6 17.6 12.2 Q19.6 13 19.8 14.2 Q18.8 16.4 17.8 17.4 L18.2 19 Q11 20.8 1.4 17.6Z" fill="#7fa880" stroke="#28602e" stroke-width="1.1" stroke-linejoin="round"/><path d="M3.5 16.5 Q6 13 8.5 12" fill="none" stroke="#c6dcc6" stroke-width="1.5" stroke-linecap="round"/><path d="M3.6 11.4 Q7 12.6 9.4 15.6" fill="none" stroke="#c6dcc6" stroke-width="1.5" stroke-linecap="round"/><path d="M4 6 Q7.4 9 9.6 13.6" fill="none" stroke="#c6dcc6" stroke-width="1.5" stroke-linecap="round"/><path d="M7.8 2.2 Q9.6 7 10.6 12.6" fill="none" stroke="#c6dcc6" stroke-width="1.5" stroke-linecap="round"/><path d="M14.8 3.6 Q12.6 8 11.4 13" fill="none" stroke="#c6dcc6" stroke-width="1.5" stroke-linecap="round"/><path d="M18.4 8.6 Q14.6 11 12.4 15" fill="none" stroke="#c6dcc6" stroke-width="1.5" stroke-linecap="round"/><path d="M18.2 14.4 Q14.6 15.4 12.6 18" fill="none" stroke="#c6dcc6" stroke-width="1.5" stroke-linecap="round"/><path d="M6 17.6 Q8 14.6 10.4 13.8" fill="none" stroke="#28602e" stroke-width="0.8" opacity="0.75"/><path d="M11.6 17.6 Q12.4 14 15.6 11.4" fill="none" stroke="#28602e" stroke-width="0.8" opacity="0.75"/><path d="M6.4 10 Q8.4 11.8 9.2 14.4" fill="none" stroke="#28602e" stroke-width="0.8" opacity="0.75"/><path d="M12.2 6.2 Q11.4 9.6 11.2 12.4" fill="none" stroke="#28602e" stroke-width="0.8" opacity="0.75"/><path d="M4 18.2 Q10.5 16 17.6 18.2 Q11 20 4 18.2Z" fill="#28602e" opacity="0.9"/><circle cx="5.8" cy="8.6" r="0.8" fill="#eef4ee"/><circle cx="9.4" cy="5.4" r="0.8" fill="#eef4ee"/><circle cx="14.4" cy="9.2" r="0.7" fill="#eef4ee"/><circle cx="6.4" cy="15" r="0.7" fill="#eef4ee"/></g><g transform="translate(135.67,196.65)"><ellipse cx="13" cy="19" rx="8.5" ry="2.4" fill="#d08850" opacity="0.6"/><path d="M1.4 17.6 Q1.6 15 2.4 13.8 Q0.6 11.6 1.2 10.2 Q2.6 10 3.8 10.8 Q2.4 6.4 3.2 4.4 Q5 4.8 6.4 6.8 Q6.6 2 8.2 1 Q10 2.4 10.8 5.4 Q13 2.4 15.2 2.2 Q15.8 4.6 15.2 7.4 Q17.8 6.8 19.6 7.8 Q19 10.6 17.6 12.2 Q19.6 13 19.8 14.2 Q18.8 16.4 17.8 17.4 L18.2 19 Q11 20.8 1.4 17.6Z" fill="#9cc43c" stroke="#32701a" stroke-width="1.1" stroke-linejoin="round"/><path d="M3.5 16.5 Q6 13 8.5 12" fill="none" stroke="#d4ea7c" stroke-width="1.5" stroke-linecap="round"/><path d="M3.6 11.4 Q7 12.6 9.4 15.6" fill="none" stroke="#d4ea7c" stroke-width="1.5" stroke-linecap="round"/><path d="M4 6 Q7.4 9 9.6 13.6" fill="none" stroke="#d4ea7c" stroke-width="1.5" stroke-linecap="round"/><path d="M7.8 2.2 Q9.6 7 10.6 12.6" fill="none" stroke="#d4ea7c" stroke-width="1.5" stroke-linecap="round"/><path d="M14.8 3.6 Q12.6 8 11.4 13" fill="none" stroke="#d4ea7c" stroke-width="1.5" stroke-linecap="round"/><path d="M18.4 8.6 Q14.6 11 12.4 15" fill="none" stroke="#d4ea7c" stroke-width="1.5" stroke-linecap="round"/><path d="M18.2 14.4 Q14.6 15.4 12.6 18" fill="none" stroke="#d4ea7c" stroke-width="1.5" stroke-linecap="round"/><path d="M6 17.6 Q8 14.6 10.4 13.8" fill="none" stroke="#32701a" stroke-width="0.8" opacity="0.75"/><path d="M11.6 17.6 Q12.4 14 15.6 11.4" fill="none" stroke="#32701a" stroke-width="0.8" opacity="0.75"/><path d="M6.4 10 Q8.4 11.8 9.2 14.4" fill="none" stroke="#32701a" stroke-width="0.8" opacity="0.75"/><path d="M12.2 6.2 Q11.4 9.6 11.2 12.4" fill="none" stroke="#32701a" stroke-width="0.8" opacity="0.75"/><path d="M4 18.2 Q10.5 16 17.6 18.2 Q11 20 4 18.2Z" fill="#32701a" opacity="0.9"/><circle cx="5.8" cy="8.6" r="0.8" fill="#f2fac8"/><circle cx="9.4" cy="5.4" r="0.8" fill="#f2fac8"/><circle cx="14.4" cy="9.2" r="0.7" fill="#f2fac8"/><circle cx="6.4" cy="15" r="0.7" fill="#f2fac8"/></g><g transform="translate(90.53,219.22)"><ellipse cx="13" cy="19" rx="8.5" ry="2.4" fill="#d08850" opacity="0.6"/><path d="M1.4 17.6 Q1.6 15 2.4 13.8 Q0.6 11.6 1.2 10.2 Q2.6 10 3.8 10.8 Q2.4 6.4 3.2 4.4 Q5 4.8 6.4 6.8 Q6.6 2 8.2 1 Q10 2.4 10.8 5.4 Q13 2.4 15.2 2.2 Q15.8 4.6 15.2 7.4 Q17.8 6.8 19.6 7.8 Q19 10.6 17.6 12.2 Q19.6 13 19.8 14.2 Q18.8 16.4 17.8 17.4 L18.2 19 Q11 20.8 1.4 17.6Z" fill="#9cc43c" stroke="#32701a" stroke-width="1.1" stroke-linejoin="round"/><path d="M3.5 16.5 Q6 13 8.5 12" fill="none" stroke="#d4ea7c" stroke-width="1.5" stroke-linecap="round"/><path d="M3.6 11.4 Q7 12.6 9.4 15.6" fill="none" stroke="#d4ea7c" stroke-width="1.5" stroke-linecap="round"/><path d="M4 6 Q7.4 9 9.6 13.6" fill="none" stroke="#d4ea7c" stroke-width="1.5" stroke-linecap="round"/><path d="M7.8 2.2 Q9.6 7 10.6 12.6" fill="none" stroke="#d4ea7c" stroke-width="1.5" stroke-linecap="round"/><path d="M14.8 3.6 Q12.6 8 11.4 13" fill="none" stroke="#d4ea7c" stroke-width="1.5" stroke-linecap="round"/><path d="M18.4 8.6 Q14.6 11 12.4 15" fill="none" stroke="#d4ea7c" stroke-width="1.5" stroke-linecap="round"/><path d="M18.2 14.4 Q14.6 15.4 12.6 18" fill="none" stroke="#d4ea7c" stroke-width="1.5" stroke-linecap="round"/><path d="M6 17.6 Q8 14.6 10.4 13.8" fill="none" stroke="#32701a" stroke-width="0.8" opacity="0.75"/><path d="M11.6 17.6 Q12.4 14 15.6 11.4" fill="none" stroke="#32701a" stroke-width="0.8" opacity="0.75"/><path d="M6.4 10 Q8.4 11.8 9.2 14.4" fill="none" stroke="#32701a" stroke-width="0.8" opacity="0.75"/><path d="M12.2 6.2 Q11.4 9.6 11.2 12.4" fill="none" stroke="#32701a" stroke-width="0.8" opacity="0.75"/><path d="M4 18.2 Q10.5 16 17.6 18.2 Q11 20 4 18.2Z" fill="#32701a" opacity="0.9"/><circle cx="5.8" cy="8.6" r="0.8" fill="#f2fac8"/><circle cx="9.4" cy="5.4" r="0.8" fill="#f2fac8"/><circle cx="14.4" cy="9.2" r="0.7" fill="#f2fac8"/><circle cx="6.4" cy="15" r="0.7" fill="#f2fac8"/></g><g transform="translate(113.1,219.22)"><ellipse cx="13" cy="19" rx="8.5" ry="2.4" fill="#d08850" opacity="0.6"/><path d="M1.4 17.6 Q1.6 15 2.4 13.8 Q0.6 11.6 1.2 10.2 Q2.6 10 3.8 10.8 Q2.4 6.4 3.2 4.4 Q5 4.8 6.4 6.8 Q6.6 2 8.2 1 Q10 2.4 10.8 5.4 Q13 2.4 15.2 2.2 Q15.8 4.6 15.2 7.4 Q17.8 6.8 19.6 7.8 Q19 10.6 17.6 12.2 Q19.6 13 19.8 14.2 Q18.8 16.4 17.8 17.4 L18.2 19 Q11 20.8 1.4 17.6Z" fill="#7fa880" stroke="#28602e" stroke-width="1.1" stroke-linejoin="round"/><path d="M3.5 16.5 Q6 13 8.5 12" fill="none" stroke="#c6dcc6" stroke-width="1.5" stroke-linecap="round"/><path d="M3.6 11.4 Q7 12.6 9.4 15.6" fill="none" stroke="#c6dcc6" stroke-width="1.5" stroke-linecap="round"/><path d="M4 6 Q7.4 9 9.6 13.6" fill="none" stroke="#c6dcc6" stroke-width="1.5" stroke-linecap="round"/><path d="M7.8 2.2 Q9.6 7 10.6 12.6" fill="none" stroke="#c6dcc6" stroke-width="1.5" stroke-linecap="round"/><path d="M14.8 3.6 Q12.6 8 11.4 13" fill="none" stroke="#c6dcc6" stroke-width="1.5" stroke-linecap="round"/><path d="M18.4 8.6 Q14.6 11 12.4 15" fill="none" stroke="#c6dcc6" stroke-width="1.5" stroke-linecap="round"/><path d="M18.2 14.4 Q14.6 15.4 12.6 18" fill="none" stroke="#c6dcc6" stroke-width="1.5" stroke-linecap="round"/><path d="M6 17.6 Q8 14.6 10.4 13.8" fill="none" stroke="#28602e" stroke-width="0.8" opacity="0.75"/><path d="M11.6 17.6 Q12.4 14 15.6 11.4" fill="none" stroke="#28602e" stroke-width="0.8" opacity="0.75"/><path d="M6.4 10 Q8.4 11.8 9.2 14.4" fill="none" stroke="#28602e" stroke-width="0.8" opacity="0.75"/><path d="M12.2 6.2 Q11.4 9.6 11.2 12.4" fill="none" stroke="#28602e" stroke-width="0.8" opacity="0.75"/><path d="M4 18.2 Q10.5 16 17.6 18.2 Q11 20 4 18.2Z" fill="#28602e" opacity="0.9"/><circle cx="5.8" cy="8.6" r="0.8" fill="#eef4ee"/><circle cx="9.4" cy="5.4" r="0.8" fill="#eef4ee"/><circle cx="14.4" cy="9.2" r="0.7" fill="#eef4ee"/><circle cx="6.4" cy="15" r="0.7" fill="#eef4ee"/></g><g transform="translate(180.81,219.22)"><ellipse cx="13" cy="19" rx="8.5" ry="2.4" fill="#d08850" opacity="0.6"/><path d="M1.4 17.6 Q1.6 15 2.4 13.8 Q0.6 11.6 1.2 10.2 Q2.6 10 3.8 10.8 Q2.4 6.4 3.2 4.4 Q5 4.8 6.4 6.8 Q6.6 2 8.2 1 Q10 2.4 10.8 5.4 Q13 2.4 15.2 2.2 Q15.8 4.6 15.2 7.4 Q17.8 6.8 19.6 7.8 Q19 10.6 17.6 12.2 Q19.6 13 19.8 14.2 Q18.8 16.4 17.8 17.4 L18.2 19 Q11 20.8 1.4 17.6Z" fill="#7fa880" stroke="#28602e" stroke-width="1.1" stroke-linejoin="round"/><path d="M3.5 16.5 Q6 13 8.5 12" fill="none" stroke="#c6dcc6" stroke-width="1.5" stroke-linecap="round"/><path d="M3.6 11.4 Q7 12.6 9.4 15.6" fill="none" stroke="#c6dcc6" stroke-width="1.5" stroke-linecap="round"/><path d="M4 6 Q7.4 9 9.6 13.6" fill="none" stroke="#c6dcc6" stroke-width="1.5" stroke-linecap="round"/><path d="M7.8 2.2 Q9.6 7 10.6 12.6" fill="none" stroke="#c6dcc6" stroke-width="1.5" stroke-linecap="round"/><path d="M14.8 3.6 Q12.6 8 11.4 13" fill="none" stroke="#c6dcc6" stroke-width="1.5" stroke-linecap="round"/><path d="M18.4 8.6 Q14.6 11 12.4 15" fill="none" stroke="#c6dcc6" stroke-width="1.5" stroke-linecap="round"/><path d="M18.2 14.4 Q14.6 15.4 12.6 18" fill="none" stroke="#c6dcc6" stroke-width="1.5" stroke-linecap="round"/><path d="M6 17.6 Q8 14.6 10.4 13.8" fill="none" stroke="#28602e" stroke-width="0.8" opacity="0.75"/><path d="M11.6 17.6 Q12.4 14 15.6 11.4" fill="none" stroke="#28602e" stroke-width="0.8" opacity="0.75"/><path d="M6.4 10 Q8.4 11.8 9.2 14.4" fill="none" stroke="#28602e" stroke-width="0.8" opacity="0.75"/><path d="M12.2 6.2 Q11.4 9.6 11.2 12.4" fill="none" stroke="#28602e" stroke-width="0.8" opacity="0.75"/><path d="M4 18.2 Q10.5 16 17.6 18.2 Q11 20 4 18.2Z" fill="#28602e" opacity="0.9"/><circle cx="5.8" cy="8.6" r="0.8" fill="#eef4ee"/><circle cx="9.4" cy="5.4" r="0.8" fill="#eef4ee"/><circle cx="14.4" cy="9.2" r="0.7" fill="#eef4ee"/><circle cx="6.4" cy="15" r="0.7" fill="#eef4ee"/></g><g transform="translate(90.53,241.79)"><ellipse cx="13" cy="19" rx="8.5" ry="2.4" fill="#d08850" opacity="0.6"/><path d="M1.4 17.6 Q1.6 15 2.4 13.8 Q0.6 11.6 1.2 10.2 Q2.6 10 3.8 10.8 Q2.4 6.4 3.2 4.4 Q5 4.8 6.4 6.8 Q6.6 2 8.2 1 Q10 2.4 10.8 5.4 Q13 2.4 15.2 2.2 Q15.8 4.6 15.2 7.4 Q17.8 6.8 19.6 7.8 Q19 10.6 17.6 12.2 Q19.6 13 19.8 14.2 Q18.8 16.4 17.8 17.4 L18.2 19 Q11 20.8 1.4 17.6Z" fill="#7fa880" stroke="#28602e" stroke-width="1.1" stroke-linejoin="round"/><path d="M3.5 16.5 Q6 13 8.5 12" fill="none" stroke="#c6dcc6" stroke-width="1.5" stroke-linecap="round"/><path d="M3.6 11.4 Q7 12.6 9.4 15.6" fill="none" stroke="#c6dcc6" stroke-width="1.5" stroke-linecap="round"/><path d="M4 6 Q7.4 9 9.6 13.6" fill="none" stroke="#c6dcc6" stroke-width="1.5" stroke-linecap="round"/><path d="M7.8 2.2 Q9.6 7 10.6 12.6" fill="none" stroke="#c6dcc6" stroke-width="1.5" stroke-linecap="round"/><path d="M14.8 3.6 Q12.6 8 11.4 13" fill="none" stroke="#c6dcc6" stroke-width="1.5" stroke-linecap="round"/><path d="M18.4 8.6 Q14.6 11 12.4 15" fill="none" stroke="#c6dcc6" stroke-width="1.5" stroke-linecap="round"/><path d="M18.2 14.4 Q14.6 15.4 12.6 18" fill="none" stroke="#c6dcc6" stroke-width="1.5" stroke-linecap="round"/><path d="M6 17.6 Q8 14.6 10.4 13.8" fill="none" stroke="#28602e" stroke-width="0.8" opacity="0.75"/><path d="M11.6 17.6 Q12.4 14 15.6 11.4" fill="none" stroke="#28602e" stroke-width="0.8" opacity="0.75"/><path d="M6.4 10 Q8.4 11.8 9.2 14.4" fill="none" stroke="#28602e" stroke-width="0.8" opacity="0.75"/><path d="M12.2 6.2 Q11.4 9.6 11.2 12.4" fill="none" stroke="#28602e" stroke-width="0.8" opacity="0.75"/><path d="M4 18.2 Q10.5 16 17.6 18.2 Q11 20 4 18.2Z" fill="#28602e" opacity="0.9"/><circle cx="5.8" cy="8.6" r="0.8" fill="#eef4ee"/><circle cx="9.4" cy="5.4" r="0.8" fill="#eef4ee"/><circle cx="14.4" cy="9.2" r="0.7" fill="#eef4ee"/><circle cx="6.4" cy="15" r="0.7" fill="#eef4ee"/></g><g transform="translate(135.67,241.79)"><ellipse cx="13" cy="19" rx="8.5" ry="2.4" fill="#d08850" opacity="0.6"/><path d="M1.4 17.6 Q1.6 15 2.4 13.8 Q0.6 11.6 1.2 10.2 Q2.6 10 3.8 10.8 Q2.4 6.4 3.2 4.4 Q5 4.8 6.4 6.8 Q6.6 2 8.2 1 Q10 2.4 10.8 5.4 Q13 2.4 15.2 2.2 Q15.8 4.6 15.2 7.4 Q17.8 6.8 19.6 7.8 Q19 10.6 17.6 12.2 Q19.6 13 19.8 14.2 Q18.8 16.4 17.8 17.4 L18.2 19 Q11 20.8 1.4 17.6Z" fill="#9cc43c" stroke="#32701a" stroke-width="1.1" stroke-linejoin="round"/><path d="M3.5 16.5 Q6 13 8.5 12" fill="none" stroke="#d4ea7c" stroke-width="1.5" stroke-linecap="round"/><path d="M3.6 11.4 Q7 12.6 9.4 15.6" fill="none" stroke="#d4ea7c" stroke-width="1.5" stroke-linecap="round"/><path d="M4 6 Q7.4 9 9.6 13.6" fill="none" stroke="#d4ea7c" stroke-width="1.5" stroke-linecap="round"/><path d="M7.8 2.2 Q9.6 7 10.6 12.6" fill="none" stroke="#d4ea7c" stroke-width="1.5" stroke-linecap="round"/><path d="M14.8 3.6 Q12.6 8 11.4 13" fill="none" stroke="#d4ea7c" stroke-width="1.5" stroke-linecap="round"/><path d="M18.4 8.6 Q14.6 11 12.4 15" fill="none" stroke="#d4ea7c" stroke-width="1.5" stroke-linecap="round"/><path d="M18.2 14.4 Q14.6 15.4 12.6 18" fill="none" stroke="#d4ea7c" stroke-width="1.5" stroke-linecap="round"/><path d="M6 17.6 Q8 14.6 10.4 13.8" fill="none" stroke="#32701a" stroke-width="0.8" opacity="0.75"/><path d="M11.6 17.6 Q12.4 14 15.6 11.4" fill="none" stroke="#32701a" stroke-width="0.8" opacity="0.75"/><path d="M6.4 10 Q8.4 11.8 9.2 14.4" fill="none" stroke="#32701a" stroke-width="0.8" opacity="0.75"/><path d="M12.2 6.2 Q11.4 9.6 11.2 12.4" fill="none" stroke="#32701a" stroke-width="0.8" opacity="0.75"/><path d="M4 18.2 Q10.5 16 17.6 18.2 Q11 20 4 18.2Z" fill="#32701a" opacity="0.9"/><circle cx="5.8" cy="8.6" r="0.8" fill="#f2fac8"/><circle cx="9.4" cy="5.4" r="0.8" fill="#f2fac8"/><circle cx="14.4" cy="9.2" r="0.7" fill="#f2fac8"/><circle cx="6.4" cy="15" r="0.7" fill="#f2fac8"/></g><path d="M285.5 144.7 L406.9 168.75 L363.8 368.9 L229.8 341.2 Z" fill="none" stroke="#000" stroke-width="1" stroke-dasharray="2 1.6"/><path d="M285.5 144.7 L334.4 273.1 L277.2 260.3 L237.5 313.5 L308.2 314 L317.4 358.5 L385 265" fill="none" stroke="#00084a" stroke-width="2.6" stroke-linejoin="round"/><path d="M285.5 144.7 L334.4 273.1 L277.2 260.3 L237.5 313.5 L308.2 314 L317.4 358.5 L385 265" fill="none" stroke="#1020c8" stroke-width="1.5" stroke-linejoin="round"/><rect x="283.2" y="142.4" width="4.6" height="4.6" fill="#e4e4e4" stroke="#1a1a1a" stroke-width="0.9"/><rect x="332.1" y="270.8" width="4.6" height="4.6" fill="#e4e4e4" stroke="#1a1a1a" stroke-width="0.9"/><rect x="274.9" y="258" width="4.6" height="4.6" fill="#e4e4e4" stroke="#1a1a1a" stroke-width="0.9"/><rect x="235.2" y="311.2" width="4.6" height="4.6" fill="#e4e4e4" stroke="#1a1a1a" stroke-width="0.9"/><rect x="305.9" y="311.7" width="4.6" height="4.6" fill="#e4e4e4" stroke="#1a1a1a" stroke-width="0.9"/><rect x="315.1" y="356.2" width="4.6" height="4.6" fill="#e4e4e4" stroke="#1a1a1a" stroke-width="0.9"/><rect x="382.2" y="262.2" width="5.6" height="5.6" fill="#2f8fd8" stroke="#102030" stroke-width="0.9"/><circle cx="274.5" cy="132" r="11" fill="#cc8468" fill-opacity="0.68" stroke="#e20c0c" stroke-width="1.9"/><text x="263.5" y="117" font-family="Liberation Sans" font-weight="bold" font-size="8.8" fill="#b80606" textLength="19.5" lengthAdjust="spacingAndGlyphs">Mo...</text></g><rect x="387.75" y="278.6" width="78" height="12.2" fill="#ffffdc" stroke="#000" stroke-width="1"/><text x="390" y="287.8" font-family="Liberation Sans" font-size="9.6" fill="#111" stroke="#111" stroke-width="0.3" textLength="73" lengthAdjust="spacingAndGlyphs">Walkpath (PATH)</text></svg>
</body></html>
